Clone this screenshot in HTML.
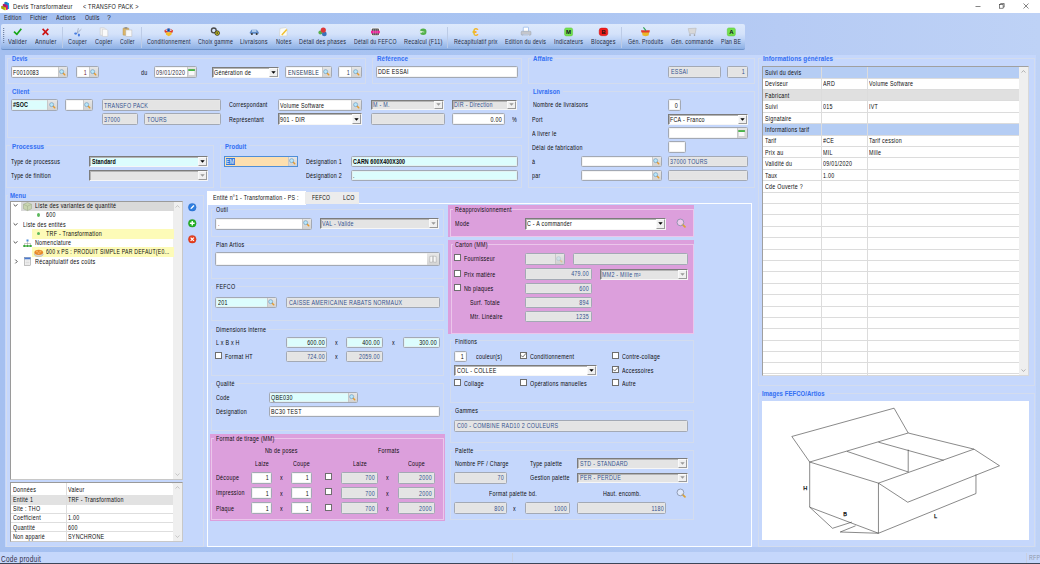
<!DOCTYPE html>
<html><head><meta charset="utf-8"><style>
html,body{margin:0;padding:0;}
body{width:1040px;height:564px;overflow:hidden;position:relative;background:linear-gradient(90deg,#a5c0f0 0%,#a9c4f2 50%,#b6cbf4 75%,#bed2f6 100%);font-family:"Liberation Sans",sans-serif;}
.a{position:absolute;white-space:nowrap;}
svg.a{overflow:visible;}

</style></head><body>
<div class="a" style="left:0px;top:0px;width:1041px;height:13px;background:#ffffff;"></div>
<svg class="a" style="left:0;top:0" width="12" height="12" viewBox="0 0 12 12"><path d="M4.3 2.2 L6 1.7 L9 3.2 L9.1 8.8 L6.5 9 L4.3 7.5 Z" fill="#1b7cc4"/><path d="M7.6 3 L9 3.2 L9.1 8.8 L7.8 8.9 Z" fill="#1aa2ee"/><path d="M2.8 4.3 L4 3.8 L7.5 5.3 L7.6 9.6 L6 9.8 L2.8 8.2 Z" fill="#b01868"/><path d="M6.3 5.1 L7.5 5.3 L7.6 9.6 L6.4 9.7 Z" fill="#e01a7a"/><path d="M1.1 6.3 L2.2 5.8 L5.8 7.5 L6 10 L4.8 10.2 L1.1 8.4 Z" fill="#a8a010"/><path d="M4.6 7.3 L5.8 7.5 L6 10 L4.8 10.2 Z" fill="#f2ee18"/></svg>
<div class="a" style="top:2.50px;font-size:7.60px;line-height:8px;color:#1a1a1a;letter-spacing:0.3px;left:13px;transform-origin:0 0;transform:scaleX(0.7595043755270457);">Devis Transformateur</div>
<div class="a" style="top:2.50px;font-size:7.60px;line-height:8px;color:#1a1a1a;letter-spacing:0.3px;left:83.25px;transform-origin:0 0;transform:scaleX(0.7300866402366534);">&lt; TRANSFO PACK &gt;</div>
<svg class="a" style="left:974px;top:2px" width="60" height="8" viewBox="0 0 60 8"><path d="M1.5 4.5 L6.5 4.5" stroke="#333" stroke-width="0.6"/><rect x="25.5" y="2.6" width="3.6" height="3.6" fill="none" stroke="#333" stroke-width="0.6"/><path d="M26.6 2.6 L26.6 1.5 L30.2 1.5 L30.2 5.1 L29.1 5.1" fill="none" stroke="#333" stroke-width="0.6"/></svg>
<svg class="a" style="left:1022.5px;top:2.5px" width="6" height="6" viewBox="0 0 6 6"><path d="M0.5 0.5 L5.5 5.5 M5.5 0.5 L0.5 5.5" stroke="#333" stroke-width="0.6"/></svg>
<div class="a" style="top:14.20px;font-size:6.80px;line-height:8px;color:#1c1c2c;letter-spacing:0.3px;left:3.8px;transform-origin:0 0;transform:scaleX(0.7702182284980743);">Edition</div>
<div class="a" style="top:14.20px;font-size:6.80px;line-height:8px;color:#1c1c2c;letter-spacing:0.3px;left:29.8px;transform-origin:0 0;transform:scaleX(0.7837087666158081);">Fichier</div>
<div class="a" style="top:14.20px;font-size:6.80px;line-height:8px;color:#1c1c2c;letter-spacing:0.3px;left:55.8px;transform-origin:0 0;transform:scaleX(0.8050230951374425);">Actions</div>
<div class="a" style="top:14.20px;font-size:6.80px;line-height:8px;color:#1c1c2c;letter-spacing:0.3px;left:84.8px;transform-origin:0 0;transform:scaleX(0.7626537968838443);">Outils</div>
<div class="a" style="top:14.20px;font-size:6.80px;line-height:8px;color:#1c1c2c;letter-spacing:0.3px;left:107.39999999999999px;transform-origin:0 0;transform:scaleX(1.004908847495167);">?</div>
<div class="a" style="left:1px;top:24px;width:744px;height:26px;background:linear-gradient(#dde9fc 0%,#d4e2fa 40%,#c2d6f7 58%,#8db0e5 100%);border-bottom:1px solid #6d92c9;border-radius:2px;box-sizing:border-box;"></div>
<svg class="a" style="left:3px;top:28px" width="2" height="17"><rect x="0.2" y="0" width="1" height="1" fill="#5a6d90"/><rect x="0.2" y="2" width="1" height="1" fill="#5a6d90"/><rect x="0.2" y="4" width="1" height="1" fill="#5a6d90"/><rect x="0.2" y="6" width="1" height="1" fill="#5a6d90"/><rect x="0.2" y="8" width="1" height="1" fill="#5a6d90"/><rect x="0.2" y="10" width="1" height="1" fill="#5a6d90"/><rect x="0.2" y="12" width="1" height="1" fill="#5a6d90"/><rect x="0.2" y="14" width="1" height="1" fill="#5a6d90"/></svg>
<div class="a" style="left:62px;top:27px;width:1px;height:21px;background:#bccbe6;"></div>
<div class="a" style="left:141px;top:27px;width:1px;height:21px;background:#bccbe6;"></div>
<div class="a" style="left:447px;top:27px;width:1px;height:21px;background:#bccbe6;"></div>
<div class="a" style="left:621px;top:27px;width:1px;height:21px;background:#bccbe6;"></div>
<div class="a" style="top:38.30px;font-size:6.80px;line-height:8px;color:#1e2a40;letter-spacing:0.3px;left:8.3px;transform-origin:0 0;transform:scaleX(0.8414444796901347);">Valider</div>
<div class="a" style="top:38.30px;font-size:6.80px;line-height:8px;color:#1e2a40;letter-spacing:0.3px;left:34.8px;transform-origin:0 0;transform:scaleX(0.8479739267829989);">Annuler</div>
<div class="a" style="top:38.30px;font-size:6.80px;line-height:8px;color:#1e2a40;letter-spacing:0.3px;left:67.8px;transform-origin:0 0;transform:scaleX(0.7940905378755453);">Couper</div>
<div class="a" style="top:38.30px;font-size:6.80px;line-height:8px;color:#1e2a40;letter-spacing:0.3px;left:94.8px;transform-origin:0 0;transform:scaleX(0.8081652558609398);">Copier</div>
<div class="a" style="top:38.30px;font-size:6.80px;line-height:8px;color:#1e2a40;letter-spacing:0.3px;left:120.39999999999999px;transform-origin:0 0;transform:scaleX(0.7554639710535286);">Coller</div>
<div class="a" style="top:38.30px;font-size:6.80px;line-height:8px;color:#1e2a40;letter-spacing:0.3px;left:146.8px;transform-origin:0 0;transform:scaleX(0.7804632426988921);">Conditionnement</div>
<div class="a" style="top:38.30px;font-size:6.80px;line-height:8px;color:#1e2a40;letter-spacing:0.3px;left:197.8px;transform-origin:0 0;transform:scaleX(0.7764797821851842);">Choix gamme</div>
<div class="a" style="top:38.30px;font-size:6.80px;line-height:8px;color:#1e2a40;letter-spacing:0.3px;left:240.4px;transform-origin:0 0;transform:scaleX(0.8270370571890123);">Livraisons</div>
<div class="a" style="top:38.30px;font-size:6.80px;line-height:8px;color:#1e2a40;letter-spacing:0.3px;left:275.8px;transform-origin:0 0;transform:scaleX(0.8121131421263919);">Notes</div>
<div class="a" style="top:38.30px;font-size:6.80px;line-height:8px;color:#1e2a40;letter-spacing:0.3px;left:299.2px;transform-origin:0 0;transform:scaleX(0.7986202560682399);">Détail des phases</div>
<div class="a" style="top:38.30px;font-size:6.80px;line-height:8px;color:#1e2a40;letter-spacing:0.3px;left:353.8px;transform-origin:0 0;transform:scaleX(0.7575732196080139);">Détail du FEFCO</div>
<div class="a" style="top:38.30px;font-size:6.80px;line-height:8px;color:#1e2a40;letter-spacing:0.3px;left:403.8px;transform-origin:0 0;transform:scaleX(0.8045214948240433);">Recalcul (F11)</div>
<div class="a" style="top:38.30px;font-size:6.80px;line-height:8px;color:#1e2a40;letter-spacing:0.3px;left:453.55px;transform-origin:0 0;transform:scaleX(0.7866166790281081);">Récapitulatif prix</div>
<div class="a" style="top:38.30px;font-size:6.80px;line-height:8px;color:#1e2a40;letter-spacing:0.3px;left:504.8px;transform-origin:0 0;transform:scaleX(0.7808649984406512);">Edition du devis</div>
<div class="a" style="top:38.30px;font-size:6.80px;line-height:8px;color:#1e2a40;letter-spacing:0.3px;left:553.8px;transform-origin:0 0;transform:scaleX(0.7970105210904427);">Indicateurs</div>
<div class="a" style="top:38.30px;font-size:6.80px;line-height:8px;color:#1e2a40;letter-spacing:0.3px;left:590.8px;transform-origin:0 0;transform:scaleX(0.8113742027063817);">Blocages</div>
<div class="a" style="top:38.30px;font-size:6.80px;line-height:8px;color:#1e2a40;letter-spacing:0.3px;left:627.55px;transform-origin:0 0;transform:scaleX(0.77809275961444);">Gén. Produits</div>
<div class="a" style="top:38.30px;font-size:6.80px;line-height:8px;color:#1e2a40;letter-spacing:0.3px;left:670.8px;transform-origin:0 0;transform:scaleX(0.7871411946120741);">Gén. commande</div>
<div class="a" style="top:38.30px;font-size:6.80px;line-height:8px;color:#1e2a40;letter-spacing:0.3px;left:721.3px;transform-origin:0 0;transform:scaleX(0.7546364875274041);">Plan BE</div>
<svg class="a" style="left:0;top:0" width="1040" height="60" viewBox="0 0 1040 60"><path d="M14 31.6 L16.9 34.3 L21.3 28.7" fill="none" stroke="#17a617" stroke-width="1.7" stroke-linejoin="round"/><path d="M42.6 28.9 L48.3 34.9 M48.3 28.9 L42.6 34.9" stroke="#cc1414" stroke-width="1.6"/><path d="M78.4 28.2 L77.2 33.2 M81.4 29.2 L77.2 33.2" stroke="#8894a8" stroke-width="0.6"/><ellipse cx="75.6" cy="33.6" rx="1.5" ry="1.1" fill="#4a7ee0"/><ellipse cx="78.9" cy="35.1" rx="1.1" ry="1.5" fill="#4a7ee0"/><path d="M100.2 27.8 L104.2 27.8 L105.6 29.2 L105.6 35.2 L100.2 35.2 Z" fill="#f2f2f2" stroke="#c4c4c4" stroke-width="0.5"/><path d="M102.4 29.2 L106.4 29.2 L107.8 30.6 L107.8 36.4 L102.4 36.4 Z" fill="#fafafa" stroke="#c0c0c0" stroke-width="0.5"/><rect x="123" y="28" width="5.8" height="7.2" rx="0.6" fill="#dcb66a" stroke="#a8884a" stroke-width="0.4"/><rect x="124.5" y="27.2" width="2.8" height="1.4" fill="#888"/><rect x="125.9" y="30" width="6" height="6.4" fill="#f8f8f8" stroke="#b8b8b8" stroke-width="0.5"/><path d="M165.5 32.2 L172 32.2 L171.4 34.8 L168.7 36.2 L166.1 34.8 Z" fill="#f3be2a"/><path d="M164.3 30.4 Q168.7 26.6 173.1 30.4 L172.4 32.8 Q168.7 31.2 165 32.8 Z" fill="#e03a2a"/><path d="M165.4 30.3 Q168.7 27.8 172 30.3 Q168.7 32 165.4 30.3 Z" fill="#f4f4f4"/><circle cx="168.6" cy="30.1" r="1.8" fill="#2f7ad8"/><circle cx="168.6" cy="30.1" r="0.6" fill="#123"/><circle cx="213.8" cy="30.4" r="2.4" fill="none" stroke="#4a4a4a" stroke-width="1.3"/><circle cx="217.2" cy="33.1" r="2.3" fill="#c9c21a" stroke="#2a2a2a" stroke-width="0.8"/><circle cx="217.2" cy="33.1" r="0.8" fill="#333"/><path d="M249.9 32.2 L251.5 29.7 L256.8 29.7 L258.7 32.2 L258.7 33.8 L249.9 33.8 Z" fill="#5f8cc8"/><rect x="252" y="30.2" width="4.4" height="1.6" fill="#c2daf4"/><circle cx="251.9" cy="34.1" r="1" fill="#333"/><circle cx="256.7" cy="34.1" r="1" fill="#333"/><path d="M280 28.4 L285.8 27.6 L287.2 29 L287 35.9 L279.4 36 Z" fill="#fbfbf6" stroke="#c8c8c0" stroke-width="0.5"/><path d="M281.8 35 L286.8 29.6" stroke="#f0c030" stroke-width="1.5"/><circle cx="320.4" cy="32.6" r="2" fill="#5aae4a"/><circle cx="324.3" cy="33.9" r="2.4" fill="#3a72b8"/><circle cx="323.3" cy="30.1" r="2.6" fill="#dd3838"/><rect x="371" y="27.7" width="8.8" height="8.1" rx="1.4" fill="#fafafa"/><rect x="371.8" y="28.4" width="7.2" height="6.8" rx="1" fill="#555"/><rect x="371" y="30.7" width="8.8" height="2.7" fill="#f0209c"/><path d="M373.5 28.6 L373.5 35 M375.4 28.6 L375.4 35 M377.3 28.6 L377.3 35" stroke="#bbb" stroke-width="0.4"/><circle cx="423.2" cy="31.7" r="3.3" fill="#52b04a"/><path d="M419.6 30.4 L423.6 31.6 L420.4 33.6 Z" fill="#d8ecd8"/><circle cx="423.6" cy="31.9" r="0.9" fill="#8fcf8a"/><text x="475.8" y="35.6" font-size="11" font-family="Liberation Sans" font-weight="bold" text-anchor="middle" fill="#f2b82e">€</text><rect x="523.3" y="27.2" width="5.2" height="4.6" rx="0.6" fill="#fff" stroke="#6a9ae0" stroke-width="0.5"/><rect x="521.2" y="31.2" width="9.8" height="4" rx="1" fill="#c4c6cc" stroke="#8c929c" stroke-width="0.4"/><rect x="523" y="34.5" width="5.8" height="1.2" fill="#f4f4f4" stroke="#7aa0d8" stroke-width="0.3"/><rect x="564.6" y="27.9" width="8" height="8" rx="1.6" fill="#74e04e" stroke="#56c436" stroke-width="0.5"/><text x="568.6" y="34.4" font-size="6" font-family="Liberation Sans" font-weight="bold" text-anchor="middle" fill="#112">M</text><rect x="599.2" y="28.1" width="8.6" height="7.6" rx="2.4" fill="#f21c1c" stroke="#cc1010" stroke-width="0.5"/><text x="603.5" y="34.2" font-size="5.8" font-family="Liberation Sans" font-weight="bold" text-anchor="middle" fill="#111">B</text><rect x="727.3" y="27.9" width="8" height="8" rx="1.6" fill="#74e04e" stroke="#56c436" stroke-width="0.5"/><text x="731.3" y="34.4" font-size="6" font-family="Liberation Sans" font-weight="bold" text-anchor="middle" fill="#112">A</text><path d="M641.8 31 L649.4 31 L648.6 35.6 L645.6 36.2 L642.6 35.6 Z" fill="#eab628"/><path d="M641 30.2 L649.8 30.2 L649.4 32.6 L641.4 32.6 Z" fill="#e23a2e"/><path d="M643.4 27.4 L646 30.6" stroke="#2aa050" stroke-width="1.1"/><path d="M688.2 28.6 L696.2 28.2 L695.2 33.6 L689.4 33.6 Z" fill="#d8d8d8" stroke="#b2b2b2" stroke-width="0.5"/><circle cx="690" cy="35.1" r="0.8" fill="#999"/><circle cx="694.5" cy="35.1" r="0.8" fill="#999"/></svg>
<div class="a" style="left:5px;top:55px;width:1031px;height:492px;background:#c5d7fc;"></div>
<div class="a" style="left:0px;top:552px;width:1041px;height:11px;background:#c5d7fb;"></div>
<div class="a" style="left:0px;top:563px;width:1041px;height:2px;background:#3c4658;"></div>
<div class="a" style="top:554.80px;font-size:8.40px;line-height:8px;color:#332f48;letter-spacing:0.3px;left:1px;transform-origin:0 0;transform:scaleX(0.7782820396826554);">Code produit</div>
<div class="a" style="left:1026px;top:553px;width:1px;height:10px;background:#c8d0e2;"></div>
<div class="a" style="left:512px;top:553px;width:1px;height:9px;background:#c8d0e2;"></div>
<div class="a" style="top:554.20px;font-size:7.00px;line-height:8px;color:#9098a8;letter-spacing:0.3px;left:1029px;transform-origin:0 0;transform:scaleX(0.7534246575342466);">RFP</div>
<div class="a" style="left:7px;top:58px;width:359px;height:26px;border:1px solid #d3dcee;box-sizing:border-box;"></div>
<div class="a" style="left:10px;top:58px;width:20px;height:3px;background:#c5d7fc;"></div>
<div class="a" style="top:55.10px;font-size:7.30px;line-height:8px;color:#3470f4;letter-spacing:0.1px;-webkit-text-stroke:0.05px #3470f4;font-weight:bold;left:11.5px;transform-origin:0 0;transform:scaleX(0.7794771676542043);">Devis</div>
<div class="a" style="left:11px;top:66px;width:57px;height:12px;background:#ffffff;border:1px solid #a3a9b4;border-radius:1.5px;box-sizing:border-box;box-shadow:inset 0 0 0 0.5px #e8e8e8;"></div>
<div class="a" style="left:58px;top:67px;width:9px;height:10px;background:linear-gradient(#e6e6e6,#d2d2d2);border-left:1px solid #c8c8c8;box-sizing:border-box;"></div>
<svg class="a" style="left:59.05px;top:68.80px;" width="6.40" height="6.40" viewBox="0 0 8 8"><line x1="4.6" y1="4.6" x2="7.2" y2="7.2" stroke="#e89a2a" stroke-width="1.8" stroke-linecap="round"/><circle cx="3.3" cy="3.3" r="2.5" fill="#b8e6fa" stroke="#5f8fb5" stroke-width="0.7"/></svg>
<div class="a" style="top:68.50px;font-size:6.40px;line-height:8px;color:#0c0c0c;letter-spacing:0.3px;left:13.2px;transform-origin:0 0;transform:scaleX(0.836);">F0010083</div>
<div class="a" style="left:76px;top:66px;width:23px;height:12px;background:#ffffff;border:1px solid #a3a9b4;border-radius:1.5px;box-sizing:border-box;box-shadow:inset 0 0 0 0.5px #e8e8e8;"></div>
<div class="a" style="left:89px;top:67px;width:9px;height:10px;background:linear-gradient(#e6e6e6,#d2d2d2);border-left:1px solid #c8c8c8;box-sizing:border-box;"></div>
<svg class="a" style="left:90.30px;top:68.80px;" width="6.40" height="6.40" viewBox="0 0 8 8"><line x1="4.6" y1="4.6" x2="7.2" y2="7.2" stroke="#e89a2a" stroke-width="1.8" stroke-linecap="round"/><circle cx="3.3" cy="3.3" r="2.5" fill="#b8e6fa" stroke="#5f8fb5" stroke-width="0.7"/></svg>
<div class="a" style="top:68.50px;font-size:6.40px;line-height:8px;color:#6a1a3a;letter-spacing:0.3px;left:-212.95px;width:300px;text-align:right;transform-origin:100% 0;transform:scaleX(0.836);">1</div>
<div class="a" style="top:68.80px;font-size:6.40px;line-height:8px;color:#0c0c0c;letter-spacing:0.3px;left:141.25px;transform-origin:0 0;transform:scaleX(0.836);">du</div>
<div class="a" style="left:154px;top:66px;width:43px;height:12px;background:#ffffff;border:1px solid #a3a9b4;border-radius:1.5px;box-sizing:border-box;box-shadow:inset 0 0 0 0.5px #e8e8e8;"></div>
<div class="a" style="left:187px;top:67px;width:9px;height:10px;background:linear-gradient(#e4e4e4,#d4d4d4);border-left:1px solid #c8c8c8;box-sizing:border-box;"></div>
<svg class="a" style="left:187.75px;top:68.60px" width="7.2" height="6.8" viewBox="0 0 7.2 6.8"><rect x="0.3" y="0.3" width="6.6" height="6.2" fill="#f8f8f8" stroke="#c4c4c4" stroke-width="0.5"/><rect x="0.3" y="0.3" width="6.6" height="1.5" fill="#1fa51f"/></svg>
<div class="a" style="top:68.50px;font-size:6.40px;line-height:8px;color:#2c2c3c;letter-spacing:0.3px;left:156.2px;transform-origin:0 0;transform:scaleX(0.836);">09/01/2020</div>
<div class="a" style="left:212px;top:67px;width:67px;height:11px;background:#ffffff;border-top:1px solid #7c7c7c;border-left:1px solid #7c7c7c;border-bottom:1px solid #f6f6f6;border-right:1px solid #f6f6f6;box-sizing:border-box;box-shadow:inset 1px 1px 0 #b4b4b4;"></div>
<div class="a" style="left:269px;top:68px;width:9px;height:9px;background:#f0f0f0;border-top:1px solid #fafafa;border-left:1px solid #fafafa;border-right:1px solid #9a9a9a;border-bottom:1px solid #9a9a9a;box-sizing:border-box;"></div>
<svg class="a" style="left:270.50px;top:70.85px" width="5" height="3" viewBox="0 0 5 3"><path d="M0.3 0.3 L4.7 0.3 L2.5 2.8 Z" fill="#000"/></svg>
<div class="a" style="top:68.85px;font-size:6.40px;line-height:8px;color:#0c0c0c;letter-spacing:0.3px;left:214.45px;transform-origin:0 0;transform:scaleX(0.836);">Génération de</div>
<div class="a" style="left:285px;top:66px;width:47px;height:12px;background:#ffffff;border:1px solid #a3a9b4;border-radius:1.5px;box-sizing:border-box;box-shadow:inset 0 0 0 0.5px #e8e8e8;"></div>
<div class="a" style="left:322px;top:67px;width:9px;height:10px;background:linear-gradient(#e6e6e6,#d2d2d2);border-left:1px solid #c8c8c8;box-sizing:border-box;"></div>
<svg class="a" style="left:323.45px;top:68.80px;" width="6.40" height="6.40" viewBox="0 0 8 8"><line x1="4.6" y1="4.6" x2="7.2" y2="7.2" stroke="#e89a2a" stroke-width="1.8" stroke-linecap="round"/><circle cx="3.3" cy="3.3" r="2.5" fill="#b8e6fa" stroke="#5f8fb5" stroke-width="0.7"/></svg>
<div class="a" style="top:68.50px;font-size:6.40px;line-height:8px;color:#2a3a5a;letter-spacing:0.3px;left:287.59999999999997px;transform-origin:0 0;transform:scaleX(0.836);">ENSEMBLE</div>
<div class="a" style="left:338px;top:66px;width:24px;height:12px;background:#ffffff;border:1px solid #a3a9b4;border-radius:1.5px;box-sizing:border-box;box-shadow:inset 0 0 0 0.5px #e8e8e8;"></div>
<div class="a" style="left:351px;top:67px;width:10px;height:10px;background:linear-gradient(#e6e6e6,#d2d2d2);border-left:1px solid #c8c8c8;box-sizing:border-box;"></div>
<svg class="a" style="left:352.80px;top:68.80px;" width="6.40" height="6.40" viewBox="0 0 8 8"><line x1="4.6" y1="4.6" x2="7.2" y2="7.2" stroke="#e89a2a" stroke-width="1.8" stroke-linecap="round"/><circle cx="3.3" cy="3.3" r="2.5" fill="#b8e6fa" stroke="#5f8fb5" stroke-width="0.7"/></svg>
<div class="a" style="top:68.50px;font-size:6.40px;line-height:8px;color:#2a3a5a;letter-spacing:0.3px;left:49.55000000000001px;width:300px;text-align:right;transform-origin:100% 0;transform:scaleX(0.836);">1</div>
<div class="a" style="left:372px;top:58px;width:150px;height:26px;border:1px solid #d3dcee;box-sizing:border-box;"></div>
<div class="a" style="left:375px;top:58px;width:35px;height:3px;background:#c5d7fc;"></div>
<div class="a" style="top:55.10px;font-size:7.30px;line-height:8px;color:#3470f4;letter-spacing:0.1px;-webkit-text-stroke:0.05px #3470f4;font-weight:bold;left:376.9px;transform-origin:0 0;transform:scaleX(0.8584368047511016);">Référence</div>
<div class="a" style="left:376px;top:66px;width:142px;height:12px;background:#ffffff;border:1px solid #a3a9b4;border-radius:1.5px;box-sizing:border-box;box-shadow:inset 0 0 0 0.5px #e8e8e8;"></div>
<div class="a" style="top:68.42px;font-size:6.40px;line-height:8px;color:#0c0c0c;letter-spacing:0.3px;left:378.45px;transform-origin:0 0;transform:scaleX(0.836);">DDE ESSAI</div>
<div class="a" style="left:528px;top:58px;width:227px;height:26px;border:1px solid #d3dcee;box-sizing:border-box;"></div>
<div class="a" style="left:531px;top:58px;width:24px;height:3px;background:#c5d7fc;"></div>
<div class="a" style="top:55.10px;font-size:7.30px;line-height:8px;color:#3470f4;letter-spacing:0.1px;-webkit-text-stroke:0.05px #3470f4;font-weight:bold;left:533px;transform-origin:0 0;transform:scaleX(0.832296378633352);">Affaire</div>
<div class="a" style="left:668px;top:66px;width:53px;height:12px;background:#e4e4e4;border:1px solid #a3a9b4;border-radius:1.5px;box-sizing:border-box;box-shadow:inset 0 0 0 0.5px #e8e8e8;"></div>
<div class="a" style="top:68.42px;font-size:6.40px;line-height:8px;color:#33528f;letter-spacing:0.3px;left:670.7px;transform-origin:0 0;transform:scaleX(0.836);">ESSAI</div>
<div class="a" style="left:727px;top:66px;width:21px;height:12px;background:#e4e4e4;border:1px solid #a3a9b4;border-radius:1.5px;box-sizing:border-box;box-shadow:inset 0 0 0 0.5px #e8e8e8;"></div>
<div class="a" style="top:68.42px;font-size:6.40px;line-height:8px;color:#33528f;letter-spacing:0.3px;left:445.29999999999995px;width:300px;text-align:right;transform-origin:100% 0;transform:scaleX(0.836);">1</div>
<div class="a" style="left:7px;top:91px;width:515px;height:47px;border:1px solid #d3dcee;box-sizing:border-box;"></div>
<div class="a" style="left:10px;top:90px;width:21px;height:3px;background:#c5d7fc;"></div>
<div class="a" style="top:88.00px;font-size:7.30px;line-height:8px;color:#3470f4;letter-spacing:0.1px;-webkit-text-stroke:0.05px #3470f4;font-weight:bold;left:11.5px;transform-origin:0 0;transform:scaleX(0.829971956307615);">Client</div>
<div class="a" style="left:11px;top:99px;width:47px;height:12px;background:#dcfdfd;border:1px solid #a3a9b4;border-radius:1.5px;box-sizing:border-box;box-shadow:inset 0 0 0 0.5px #e8e8e8;"></div>
<div class="a" style="left:47px;top:100px;width:10px;height:10px;background:linear-gradient(#e6e6e6,#d2d2d2);border-left:1px solid #c8c8c8;box-sizing:border-box;"></div>
<svg class="a" style="left:48.80px;top:101.72px;" width="6.40" height="6.40" viewBox="0 0 8 8"><line x1="4.6" y1="4.6" x2="7.2" y2="7.2" stroke="#e89a2a" stroke-width="1.8" stroke-linecap="round"/><circle cx="3.3" cy="3.3" r="2.5" fill="#b8e6fa" stroke="#5f8fb5" stroke-width="0.7"/></svg>
<div class="a" style="top:101.42px;font-size:6.40px;line-height:8px;color:#0c0c0c;letter-spacing:0.1px;-webkit-text-stroke:0.05px #0c0c0c;font-weight:bold;left:13.2px;transform-origin:0 0;transform:scaleX(0.836);">#SOC</div>
<div class="a" style="left:65px;top:99px;width:28px;height:12px;background:#ffffff;border:1px solid #a3a9b4;border-radius:1.5px;box-sizing:border-box;box-shadow:inset 0 0 0 0.5px #e8e8e8;"></div>
<div class="a" style="left:83px;top:100px;width:9px;height:10px;background:linear-gradient(#e6e6e6,#d2d2d2);border-left:1px solid #c8c8c8;box-sizing:border-box;"></div>
<svg class="a" style="left:84.05px;top:101.72px;" width="6.40" height="6.40" viewBox="0 0 8 8"><line x1="4.6" y1="4.6" x2="7.2" y2="7.2" stroke="#e89a2a" stroke-width="1.8" stroke-linecap="round"/><circle cx="3.3" cy="3.3" r="2.5" fill="#b8e6fa" stroke="#5f8fb5" stroke-width="0.7"/></svg>
<div class="a" style="left:102px;top:99px;width:119px;height:12px;background:#e4e4e4;border:1px solid #a3a9b4;border-radius:1.5px;box-sizing:border-box;box-shadow:inset 0 0 0 0.5px #e8e8e8;"></div>
<div class="a" style="top:101.60px;font-size:6.40px;line-height:8px;color:#33528f;letter-spacing:0.3px;left:104.45px;transform-origin:0 0;transform:scaleX(0.836);">TRANSFO PACK</div>
<div class="a" style="left:102px;top:113px;width:36px;height:12px;background:#e4e4e4;border:1px solid #a3a9b4;border-radius:1.5px;box-sizing:border-box;box-shadow:inset 0 0 0 0.5px #e8e8e8;"></div>
<div class="a" style="top:115.58px;font-size:6.40px;line-height:8px;color:#33528f;letter-spacing:0.3px;left:104.45px;transform-origin:0 0;transform:scaleX(0.836);">37000</div>
<div class="a" style="left:144px;top:113px;width:77px;height:12px;background:#e4e4e4;border:1px solid #a3a9b4;border-radius:1.5px;box-sizing:border-box;box-shadow:inset 0 0 0 0.5px #e8e8e8;"></div>
<div class="a" style="top:115.58px;font-size:6.40px;line-height:8px;color:#33528f;letter-spacing:0.3px;left:146.6px;transform-origin:0 0;transform:scaleX(0.836);">TOURS</div>
<div class="a" style="top:101.30px;font-size:6.40px;line-height:8px;color:#0c0c0c;letter-spacing:0.3px;left:228.75px;transform-origin:0 0;transform:scaleX(0.836);">Correspondant</div>
<div class="a" style="top:115.50px;font-size:6.40px;line-height:8px;color:#0c0c0c;letter-spacing:0.3px;left:228.75px;transform-origin:0 0;transform:scaleX(0.836);">Représentant</div>
<div class="a" style="left:278px;top:99px;width:84px;height:12px;background:#ffffff;border:1px solid #a3a9b4;border-radius:1.5px;box-sizing:border-box;box-shadow:inset 0 0 0 0.5px #e8e8e8;"></div>
<div class="a" style="left:351px;top:100px;width:10px;height:10px;background:linear-gradient(#e6e6e6,#d2d2d2);border-left:1px solid #c8c8c8;box-sizing:border-box;"></div>
<svg class="a" style="left:352.80px;top:101.97px;" width="6.40" height="6.40" viewBox="0 0 8 8"><line x1="4.6" y1="4.6" x2="7.2" y2="7.2" stroke="#e89a2a" stroke-width="1.8" stroke-linecap="round"/><circle cx="3.3" cy="3.3" r="2.5" fill="#b8e6fa" stroke="#5f8fb5" stroke-width="0.7"/></svg>
<div class="a" style="top:101.67px;font-size:6.40px;line-height:8px;color:#0c0c0c;letter-spacing:0.3px;left:280.3px;transform-origin:0 0;transform:scaleX(0.836);">Volume Software</div>
<div class="a" style="left:278px;top:113px;width:84px;height:12px;background:#ffffff;border-top:1px solid #7c7c7c;border-left:1px solid #7c7c7c;border-bottom:1px solid #f6f6f6;border-right:1px solid #f6f6f6;box-sizing:border-box;box-shadow:inset 1px 1px 0 #b4b4b4;"></div>
<div class="a" style="left:352px;top:114px;width:9px;height:10px;background:#f0f0f0;border-top:1px solid #fafafa;border-left:1px solid #fafafa;border-right:1px solid #9a9a9a;border-bottom:1px solid #9a9a9a;box-sizing:border-box;"></div>
<svg class="a" style="left:353.75px;top:117.65px" width="5" height="3" viewBox="0 0 5 3"><path d="M0.3 0.3 L4.7 0.3 L2.5 2.8 Z" fill="#000"/></svg>
<div class="a" style="top:115.65px;font-size:6.40px;line-height:8px;color:#0c0c0c;letter-spacing:0.3px;left:280.3px;transform-origin:0 0;transform:scaleX(0.836);">901 - DIR</div>
<div class="a" style="left:371px;top:100px;width:73px;height:10px;background:#e4e4e4;border-top:1px solid #7c7c7c;border-left:1px solid #7c7c7c;border-bottom:1px solid #f6f6f6;border-right:1px solid #f6f6f6;box-sizing:border-box;box-shadow:inset 1px 1px 0 #b4b4b4;"></div>
<div class="a" style="left:434px;top:101px;width:9px;height:8px;background:#f0f0f0;border-top:1px solid #fafafa;border-left:1px solid #fafafa;border-right:1px solid #9a9a9a;border-bottom:1px solid #9a9a9a;box-sizing:border-box;"></div>
<svg class="a" style="left:436.25px;top:103.38px" width="5" height="3" viewBox="0 0 5 3"><path d="M0.3 0.3 L4.7 0.3 L2.5 2.8 Z" fill="#9a9a9a"/></svg>
<div class="a" style="top:101.38px;font-size:6.40px;line-height:8px;color:#33528f;letter-spacing:0.3px;left:373.4px;transform-origin:0 0;transform:scaleX(0.836);">M - M.</div>
<div class="a" style="left:371px;top:113px;width:74px;height:12px;background:#e4e4e4;border:1px solid #a3a9b4;border-radius:1.5px;box-sizing:border-box;box-shadow:inset 0 0 0 0.5px #e8e8e8;"></div>
<div class="a" style="left:452px;top:100px;width:65px;height:10px;background:#e4e4e4;border-top:1px solid #7c7c7c;border-left:1px solid #7c7c7c;border-bottom:1px solid #f6f6f6;border-right:1px solid #f6f6f6;box-sizing:border-box;box-shadow:inset 1px 1px 0 #b4b4b4;"></div>
<div class="a" style="left:507px;top:101px;width:9px;height:8px;background:#f0f0f0;border-top:1px solid #fafafa;border-left:1px solid #fafafa;border-right:1px solid #9a9a9a;border-bottom:1px solid #9a9a9a;box-sizing:border-box;"></div>
<svg class="a" style="left:508.50px;top:103.38px" width="5" height="3" viewBox="0 0 5 3"><path d="M0.3 0.3 L4.7 0.3 L2.5 2.8 Z" fill="#9a9a9a"/></svg>
<div class="a" style="top:101.38px;font-size:6.40px;line-height:8px;color:#33528f;letter-spacing:0.3px;left:454.4px;transform-origin:0 0;transform:scaleX(0.836);">DIR - Direction</div>
<div class="a" style="left:452px;top:113px;width:53px;height:12px;background:#ffffff;border:1px solid #a3a9b4;border-radius:1.5px;box-sizing:border-box;box-shadow:inset 0 0 0 0.5px #e8e8e8;"></div>
<div class="a" style="top:115.58px;font-size:6.40px;line-height:8px;color:#0c0c0c;letter-spacing:0.3px;left:201.8px;width:300px;text-align:right;transform-origin:100% 0;transform:scaleX(0.836);">0.00</div>
<div class="a" style="top:115.50px;font-size:6.40px;line-height:8px;color:#0c0c0c;letter-spacing:0.3px;left:512px;transform-origin:0 0;transform:scaleX(0.836);">%</div>
<div class="a" style="left:528px;top:91px;width:227px;height:97px;border:1px solid #d3dcee;box-sizing:border-box;"></div>
<div class="a" style="left:531px;top:91px;width:32px;height:3px;background:#c5d7fc;"></div>
<div class="a" style="top:88.20px;font-size:7.30px;line-height:8px;color:#3470f4;letter-spacing:0.1px;-webkit-text-stroke:0.05px #3470f4;font-weight:bold;left:533px;transform-origin:0 0;transform:scaleX(0.8117118463812785);">Livraison</div>
<div class="a" style="top:101.30px;font-size:6.40px;line-height:8px;color:#0c0c0c;letter-spacing:0.3px;left:533px;transform-origin:0 0;transform:scaleX(0.836);">Nombre de livraisons</div>
<div class="a" style="left:668px;top:99px;width:13px;height:12px;background:#ffffff;border:1px solid #a3a9b4;border-radius:1.5px;box-sizing:border-box;box-shadow:inset 0 0 0 0.5px #e8e8e8;"></div>
<div class="a" style="top:101.50px;font-size:6.40px;line-height:8px;color:#0c0c0c;letter-spacing:0.3px;left:378.04999999999995px;width:300px;text-align:right;transform-origin:100% 0;transform:scaleX(0.836);">0</div>
<div class="a" style="top:115.80px;font-size:6.40px;line-height:8px;color:#0c0c0c;letter-spacing:0.3px;left:532.4px;transform-origin:0 0;transform:scaleX(0.836);">Port</div>
<div class="a" style="left:668px;top:114px;width:80px;height:11px;background:#ffffff;border-top:1px solid #7c7c7c;border-left:1px solid #7c7c7c;border-bottom:1px solid #f6f6f6;border-right:1px solid #f6f6f6;box-sizing:border-box;box-shadow:inset 1px 1px 0 #b4b4b4;"></div>
<div class="a" style="left:738px;top:115px;width:9px;height:9px;background:#f0f0f0;border-top:1px solid #fafafa;border-left:1px solid #fafafa;border-right:1px solid #9a9a9a;border-bottom:1px solid #9a9a9a;box-sizing:border-box;"></div>
<svg class="a" style="left:739.70px;top:117.65px" width="5" height="3" viewBox="0 0 5 3"><path d="M0.3 0.3 L4.7 0.3 L2.5 2.8 Z" fill="#000"/></svg>
<div class="a" style="top:115.65px;font-size:6.40px;line-height:8px;color:#0c0c0c;letter-spacing:0.3px;left:670.4000000000001px;transform-origin:0 0;transform:scaleX(0.836);">FCA - Franco</div>
<div class="a" style="top:129.70px;font-size:6.40px;line-height:8px;color:#0c0c0c;letter-spacing:0.3px;left:532.4px;transform-origin:0 0;transform:scaleX(0.836);">A livrer le</div>
<div class="a" style="left:668px;top:127px;width:80px;height:12px;background:#ffffff;border:1px solid #a3a9b4;border-radius:1.5px;box-sizing:border-box;box-shadow:inset 0 0 0 0.5px #e8e8e8;"></div>
<div class="a" style="left:737px;top:128px;width:10px;height:10px;background:linear-gradient(#e4e4e4,#d4d4d4);border-left:1px solid #c8c8c8;box-sizing:border-box;"></div>
<svg class="a" style="left:738.35px;top:129.75px" width="7.2" height="6.8" viewBox="0 0 7.2 6.8"><rect x="0.3" y="0.3" width="6.6" height="6.2" fill="#f8f8f8" stroke="#c4c4c4" stroke-width="0.5"/><rect x="0.3" y="0.3" width="6.6" height="1.5" fill="#1fa51f"/></svg>
<div class="a" style="top:143.90px;font-size:6.40px;line-height:8px;color:#0c0c0c;letter-spacing:0.3px;left:532.4px;transform-origin:0 0;transform:scaleX(0.836);">Délai de fabrication</div>
<div class="a" style="left:668px;top:141px;width:18px;height:12px;background:#ffffff;border:1px solid #a3a9b4;border-radius:1.5px;box-sizing:border-box;box-shadow:inset 0 0 0 0.5px #e8e8e8;"></div>
<div class="a" style="top:158.10px;font-size:6.40px;line-height:8px;color:#0c0c0c;letter-spacing:0.3px;left:532.4px;transform-origin:0 0;transform:scaleX(0.836);">à</div>
<div class="a" style="left:581px;top:156px;width:81px;height:11px;background:#ffffff;border:1px solid #a3a9b4;border-radius:1.5px;box-sizing:border-box;box-shadow:inset 0 0 0 0.5px #e8e8e8;"></div>
<div class="a" style="left:652px;top:157px;width:9px;height:9px;background:linear-gradient(#e6e6e6,#d2d2d2);border-left:1px solid #c8c8c8;box-sizing:border-box;"></div>
<svg class="a" style="left:653.35px;top:158.25px;" width="6.40" height="6.40" viewBox="0 0 8 8"><line x1="4.6" y1="4.6" x2="7.2" y2="7.2" stroke="#e89a2a" stroke-width="1.8" stroke-linecap="round"/><circle cx="3.3" cy="3.3" r="2.5" fill="#b8e6fa" stroke="#5f8fb5" stroke-width="0.7"/></svg>
<div class="a" style="left:668px;top:156px;width:80px;height:11px;background:#e4e4e4;border:1px solid #a3a9b4;border-radius:1.5px;box-sizing:border-box;box-shadow:inset 0 0 0 0.5px #e8e8e8;"></div>
<div class="a" style="top:157.80px;font-size:6.40px;line-height:8px;color:#33528f;letter-spacing:0.3px;left:670.4000000000001px;transform-origin:0 0;transform:scaleX(0.836);">37000 TOURS</div>
<div class="a" style="top:172.00px;font-size:6.40px;line-height:8px;color:#0c0c0c;letter-spacing:0.3px;left:532.4px;transform-origin:0 0;transform:scaleX(0.836);">par</div>
<div class="a" style="left:581px;top:170px;width:81px;height:11px;background:#ffffff;border:1px solid #a3a9b4;border-radius:1.5px;box-sizing:border-box;box-shadow:inset 0 0 0 0.5px #e8e8e8;"></div>
<div class="a" style="left:652px;top:171px;width:9px;height:9px;background:linear-gradient(#e6e6e6,#d2d2d2);border-left:1px solid #c8c8c8;box-sizing:border-box;"></div>
<svg class="a" style="left:653.35px;top:172.20px;" width="6.40" height="6.40" viewBox="0 0 8 8"><line x1="4.6" y1="4.6" x2="7.2" y2="7.2" stroke="#e89a2a" stroke-width="1.8" stroke-linecap="round"/><circle cx="3.3" cy="3.3" r="2.5" fill="#b8e6fa" stroke="#5f8fb5" stroke-width="0.7"/></svg>
<div class="a" style="left:668px;top:170px;width:80px;height:11px;background:#e4e4e4;border:1px solid #a3a9b4;border-radius:1.5px;box-sizing:border-box;box-shadow:inset 0 0 0 0.5px #e8e8e8;"></div>
<div class="a" style="left:6px;top:145px;width:208px;height:43px;border:1px solid #d3dcee;box-sizing:border-box;"></div>
<div class="a" style="left:10px;top:145px;width:36px;height:3px;background:#c5d7fc;"></div>
<div class="a" style="top:142.50px;font-size:7.30px;line-height:8px;color:#3470f4;letter-spacing:0.1px;-webkit-text-stroke:0.05px #3470f4;font-weight:bold;left:11.5px;transform-origin:0 0;transform:scaleX(0.8479494461483423);">Processus</div>
<div class="a" style="top:157.90px;font-size:6.40px;line-height:8px;color:#0c0c0c;letter-spacing:0.3px;left:11px;transform-origin:0 0;transform:scaleX(0.836);">Type de processus</div>
<div class="a" style="top:171.90px;font-size:6.40px;line-height:8px;color:#0c0c0c;letter-spacing:0.3px;left:11px;transform-origin:0 0;transform:scaleX(0.836);">Type de finition</div>
<div class="a" style="left:89px;top:156px;width:119px;height:11px;background:#dcfdfd;border-top:1px solid #7c7c7c;border-left:1px solid #7c7c7c;border-bottom:1px solid #f6f6f6;border-right:1px solid #f6f6f6;box-sizing:border-box;box-shadow:inset 1px 1px 0 #b4b4b4;"></div>
<div class="a" style="left:198px;top:157px;width:9px;height:9px;background:#f0f0f0;border-top:1px solid #fafafa;border-left:1px solid #fafafa;border-right:1px solid #9a9a9a;border-bottom:1px solid #9a9a9a;box-sizing:border-box;"></div>
<svg class="a" style="left:200.25px;top:159.88px" width="5" height="3" viewBox="0 0 5 3"><path d="M0.3 0.3 L4.7 0.3 L2.5 2.8 Z" fill="#000"/></svg>
<div class="a" style="top:157.88px;font-size:6.40px;line-height:8px;color:#0c0c0c;letter-spacing:0.1px;-webkit-text-stroke:0.05px #0c0c0c;font-weight:bold;left:91.60000000000001px;transform-origin:0 0;transform:scaleX(0.836);">Standard</div>
<div class="a" style="left:89px;top:170px;width:119px;height:11px;background:#e4e4e4;border-top:1px solid #7c7c7c;border-left:1px solid #7c7c7c;border-bottom:1px solid #f6f6f6;border-right:1px solid #f6f6f6;box-sizing:border-box;box-shadow:inset 1px 1px 0 #b4b4b4;"></div>
<div class="a" style="left:198px;top:171px;width:9px;height:9px;background:#f0f0f0;border-top:1px solid #fafafa;border-left:1px solid #fafafa;border-right:1px solid #9a9a9a;border-bottom:1px solid #9a9a9a;box-sizing:border-box;"></div>
<svg class="a" style="left:200.25px;top:173.95px" width="5" height="3" viewBox="0 0 5 3"><path d="M0.3 0.3 L4.7 0.3 L2.5 2.8 Z" fill="#9a9a9a"/></svg>
<div class="a" style="left:220px;top:145px;width:302px;height:43px;border:1px solid #d3dcee;box-sizing:border-box;"></div>
<div class="a" style="left:223px;top:145px;width:26px;height:3px;background:#c5d7fc;"></div>
<div class="a" style="top:142.50px;font-size:7.30px;line-height:8px;color:#3470f4;letter-spacing:0.1px;-webkit-text-stroke:0.05px #3470f4;font-weight:bold;left:225px;transform-origin:0 0;transform:scaleX(0.8124894443581838);">Produit</div>
<div class="a" style="left:224px;top:156px;width:74px;height:11px;background:#fddfaf;border:1px solid #4f8ed8;box-sizing:border-box;"></div>
<div class="a" style="left:288px;top:157px;width:9px;height:9px;background:linear-gradient(#e6e6e6,#d2d2d2);border-left:1px solid #c8c8c8;box-sizing:border-box;"></div>
<svg class="a" style="left:289.05px;top:158.23px;" width="6.40" height="6.40" viewBox="0 0 8 8"><line x1="4.6" y1="4.6" x2="7.2" y2="7.2" stroke="#e89a2a" stroke-width="1.8" stroke-linecap="round"/><circle cx="3.3" cy="3.3" r="2.5" fill="#b8e6fa" stroke="#5f8fb5" stroke-width="0.7"/></svg>
<div class="a" style="left:226px;top:158px;width:9px;height:7px;background:#3478d8;"></div>
<div class="a" style="top:157.80px;font-size:6.40px;line-height:8px;color:#ffffff;letter-spacing:0.3px;left:226.2px;transform-origin:0 0;transform:scaleX(0.836);">EM</div>
<div class="a" style="top:157.80px;font-size:6.40px;line-height:8px;color:#0c0c0c;letter-spacing:0.3px;left:305.6px;transform-origin:0 0;transform:scaleX(0.836);">Désignation 1</div>
<div class="a" style="top:171.90px;font-size:6.40px;line-height:8px;color:#0c0c0c;letter-spacing:0.3px;left:305.6px;transform-origin:0 0;transform:scaleX(0.836);">Désignation 2</div>
<div class="a" style="left:351px;top:156px;width:167px;height:11px;background:#dcfdfd;border:1px solid #a3a9b4;border-radius:1.5px;box-sizing:border-box;box-shadow:inset 0 0 0 0.5px #e8e8e8;"></div>
<div class="a" style="top:158.00px;font-size:6.40px;line-height:8px;color:#0c0c0c;letter-spacing:0.1px;-webkit-text-stroke:0.05px #0c0c0c;font-weight:bold;left:353.45px;transform-origin:0 0;transform:scaleX(0.836);">CARN 600X400X300</div>
<div class="a" style="left:351px;top:170px;width:167px;height:11px;background:#dcfdfd;border:1px solid #a3a9b4;border-radius:1.5px;box-sizing:border-box;box-shadow:inset 0 0 0 0.5px #e8e8e8;"></div>
<div class="a" style="top:172.10px;font-size:6.40px;line-height:8px;color:#0c0c0c;letter-spacing:0.3px;left:353.45px;transform-origin:0 0;transform:scaleX(0.836);">.</div>
<div class="a" style="left:758px;top:58px;width:277px;height:328px;border:1px solid #d3dcee;box-sizing:border-box;"></div>
<div class="a" style="left:761px;top:58px;width:74px;height:3px;background:#c5d7fc;"></div>
<div class="a" style="top:55.10px;font-size:7.30px;line-height:8px;color:#3470f4;letter-spacing:0.1px;-webkit-text-stroke:0.05px #3470f4;font-weight:bold;left:762.9px;transform-origin:0 0;transform:scaleX(0.8490665957898219);">Informations générales</div>
<div class="a" style="left:762px;top:66px;width:267px;height:310px;background:#fff;border:1px solid #a0a0a0;border-right-color:#d8d8d8;border-bottom-color:#d8d8d8;box-sizing:border-box;"></div>
<div class="a" style="left:763px;top:67px;width:256px;height:12px;background:#b5cdf4;border-bottom:1px solid #dcdcdc;box-sizing:border-box;"></div>
<div class="a" style="top:69.00px;font-size:6.40px;line-height:8px;color:#0c0c0c;letter-spacing:0.3px;left:764.6px;transform-origin:0 0;transform:scaleX(0.836);">Suivi du devis</div>
<div class="a" style="left:763px;top:79px;width:256px;height:11px;background:#fff;border-bottom:1px solid #dcdcdc;box-sizing:border-box;"></div>
<div class="a" style="top:80.40px;font-size:6.40px;line-height:8px;color:#0c0c0c;letter-spacing:0.3px;left:764.6px;transform-origin:0 0;transform:scaleX(0.836);">Deviseur</div>
<div class="a" style="top:80.40px;font-size:6.40px;line-height:8px;color:#0c0c0c;letter-spacing:0.3px;left:823.3px;transform-origin:0 0;transform:scaleX(0.836);">ARD</div>
<div class="a" style="top:80.40px;font-size:6.40px;line-height:8px;color:#0c0c0c;letter-spacing:0.3px;left:869.4px;transform-origin:0 0;transform:scaleX(0.836);">Volume Software</div>
<div class="a" style="left:763px;top:90px;width:256px;height:11px;background:#e0e0e0;border-bottom:1px solid #dcdcdc;box-sizing:border-box;"></div>
<div class="a" style="top:91.80px;font-size:6.40px;line-height:8px;color:#0c0c0c;letter-spacing:0.3px;left:764.6px;transform-origin:0 0;transform:scaleX(0.836);">Fabricant</div>
<div class="a" style="left:763px;top:101px;width:256px;height:12px;background:#fff;border-bottom:1px solid #dcdcdc;box-sizing:border-box;"></div>
<div class="a" style="top:103.20px;font-size:6.40px;line-height:8px;color:#0c0c0c;letter-spacing:0.3px;left:764.6px;transform-origin:0 0;transform:scaleX(0.836);">Suivi</div>
<div class="a" style="top:103.20px;font-size:6.40px;line-height:8px;color:#0c0c0c;letter-spacing:0.3px;left:823.3px;transform-origin:0 0;transform:scaleX(0.836);">015</div>
<div class="a" style="top:103.20px;font-size:6.40px;line-height:8px;color:#0c0c0c;letter-spacing:0.3px;left:869.4px;transform-origin:0 0;transform:scaleX(0.836);">IVT</div>
<div class="a" style="left:763px;top:113px;width:256px;height:11px;background:#fff;border-bottom:1px solid #dcdcdc;box-sizing:border-box;"></div>
<div class="a" style="top:114.60px;font-size:6.40px;line-height:8px;color:#0c0c0c;letter-spacing:0.3px;left:764.6px;transform-origin:0 0;transform:scaleX(0.836);">Signataire</div>
<div class="a" style="left:763px;top:124px;width:256px;height:12px;background:#b5cdf4;border-bottom:1px solid #dcdcdc;box-sizing:border-box;"></div>
<div class="a" style="top:126.00px;font-size:6.40px;line-height:8px;color:#0c0c0c;letter-spacing:0.3px;left:764.6px;transform-origin:0 0;transform:scaleX(0.836);">Informations tarif</div>
<div class="a" style="left:763px;top:136px;width:256px;height:11px;background:#fff;border-bottom:1px solid #dcdcdc;box-sizing:border-box;"></div>
<div class="a" style="top:137.40px;font-size:6.40px;line-height:8px;color:#0c0c0c;letter-spacing:0.3px;left:764.6px;transform-origin:0 0;transform:scaleX(0.836);">Tarif</div>
<div class="a" style="top:137.40px;font-size:6.40px;line-height:8px;color:#0c0c0c;letter-spacing:0.3px;left:823.3px;transform-origin:0 0;transform:scaleX(0.836);">#CE</div>
<div class="a" style="top:137.40px;font-size:6.40px;line-height:8px;color:#0c0c0c;letter-spacing:0.3px;left:869.4px;transform-origin:0 0;transform:scaleX(0.836);">Tarif cession</div>
<div class="a" style="left:763px;top:147px;width:256px;height:11px;background:#fff;border-bottom:1px solid #dcdcdc;box-sizing:border-box;"></div>
<div class="a" style="top:148.80px;font-size:6.40px;line-height:8px;color:#0c0c0c;letter-spacing:0.3px;left:764.6px;transform-origin:0 0;transform:scaleX(0.836);">Prix au</div>
<div class="a" style="top:148.80px;font-size:6.40px;line-height:8px;color:#0c0c0c;letter-spacing:0.3px;left:823.3px;transform-origin:0 0;transform:scaleX(0.836);">MIL</div>
<div class="a" style="top:148.80px;font-size:6.40px;line-height:8px;color:#0c0c0c;letter-spacing:0.3px;left:869.4px;transform-origin:0 0;transform:scaleX(0.836);">Mille</div>
<div class="a" style="left:763px;top:158px;width:256px;height:12px;background:#fff;border-bottom:1px solid #dcdcdc;box-sizing:border-box;"></div>
<div class="a" style="top:160.20px;font-size:6.40px;line-height:8px;color:#0c0c0c;letter-spacing:0.3px;left:764.6px;transform-origin:0 0;transform:scaleX(0.836);">Validité du</div>
<div class="a" style="top:160.20px;font-size:6.40px;line-height:8px;color:#0c0c0c;letter-spacing:0.3px;left:823.3px;transform-origin:0 0;transform:scaleX(0.836);">09/01/2020</div>
<div class="a" style="left:763px;top:170px;width:256px;height:11px;background:#fff;border-bottom:1px solid #dcdcdc;box-sizing:border-box;"></div>
<div class="a" style="top:171.60px;font-size:6.40px;line-height:8px;color:#0c0c0c;letter-spacing:0.3px;left:764.6px;transform-origin:0 0;transform:scaleX(0.836);">Taux</div>
<div class="a" style="top:171.60px;font-size:6.40px;line-height:8px;color:#0c0c0c;letter-spacing:0.3px;left:823.3px;transform-origin:0 0;transform:scaleX(0.836);">1.00</div>
<div class="a" style="left:763px;top:181px;width:256px;height:12px;background:#fff;border-bottom:1px solid #dcdcdc;box-sizing:border-box;"></div>
<div class="a" style="top:183.00px;font-size:6.40px;line-height:8px;color:#0c0c0c;letter-spacing:0.3px;left:764.6px;transform-origin:0 0;transform:scaleX(0.836);">Cde Ouverte ?</div>
<div class="a" style="left:763px;top:193px;width:256px;height:11px;background:#fff;border-bottom:1px solid #dcdcdc;box-sizing:border-box;"></div>
<div class="a" style="left:763px;top:204px;width:256px;height:11px;background:#fff;border-bottom:1px solid #dcdcdc;box-sizing:border-box;"></div>
<div class="a" style="left:763px;top:215px;width:256px;height:12px;background:#fff;border-bottom:1px solid #dcdcdc;box-sizing:border-box;"></div>
<div class="a" style="left:763px;top:227px;width:256px;height:11px;background:#fff;border-bottom:1px solid #dcdcdc;box-sizing:border-box;"></div>
<div class="a" style="left:763px;top:238px;width:256px;height:12px;background:#fff;border-bottom:1px solid #dcdcdc;box-sizing:border-box;"></div>
<div class="a" style="left:763px;top:250px;width:256px;height:11px;background:#fff;border-bottom:1px solid #dcdcdc;box-sizing:border-box;"></div>
<div class="a" style="left:763px;top:261px;width:256px;height:11px;background:#fff;border-bottom:1px solid #dcdcdc;box-sizing:border-box;"></div>
<div class="a" style="left:763px;top:272px;width:256px;height:12px;background:#fff;border-bottom:1px solid #dcdcdc;box-sizing:border-box;"></div>
<div class="a" style="left:763px;top:284px;width:256px;height:11px;background:#fff;border-bottom:1px solid #dcdcdc;box-sizing:border-box;"></div>
<div class="a" style="left:763px;top:295px;width:256px;height:12px;background:#fff;border-bottom:1px solid #dcdcdc;box-sizing:border-box;"></div>
<div class="a" style="left:763px;top:307px;width:256px;height:11px;background:#fff;border-bottom:1px solid #dcdcdc;box-sizing:border-box;"></div>
<div class="a" style="left:763px;top:318px;width:256px;height:11px;background:#fff;border-bottom:1px solid #dcdcdc;box-sizing:border-box;"></div>
<div class="a" style="left:763px;top:329px;width:256px;height:12px;background:#fff;border-bottom:1px solid #dcdcdc;box-sizing:border-box;"></div>
<div class="a" style="left:763px;top:341px;width:256px;height:11px;background:#fff;border-bottom:1px solid #dcdcdc;box-sizing:border-box;"></div>
<div class="a" style="left:763px;top:352px;width:256px;height:11px;background:#fff;border-bottom:1px solid #dcdcdc;box-sizing:border-box;"></div>
<div class="a" style="left:763px;top:363px;width:256px;height:11px;background:#fff;border-bottom:1px solid #dcdcdc;box-sizing:border-box;"></div>
<div class="a" style="left:821px;top:67px;width:1px;height:308px;background:#dcdcdc;"></div>
<div class="a" style="left:867px;top:67px;width:1px;height:308px;background:#dcdcdc;"></div>
<div class="a" style="left:1019px;top:67px;width:9px;height:308px;background:#efefef;"></div>
<svg class="a" style="left:1021px;top:70px" width="5" height="3" viewBox="0 0 5 3"><path d="M0.5 2.5 L2.5 0.6 L4.5 2.5" fill="none" stroke="#888" stroke-width="0.6"/></svg>
<svg class="a" style="left:1021px;top:369px" width="5" height="3" viewBox="0 0 5 3"><path d="M0.5 0.5 L2.5 2.4 L4.5 0.5" fill="none" stroke="#888" stroke-width="0.6"/></svg>
<div class="a" style="left:758px;top:393px;width:277px;height:154px;border:1px solid #d3dcee;box-sizing:border-box;"></div>
<div class="a" style="left:760px;top:393px;width:70px;height:3px;background:#c5d7fc;"></div>
<div class="a" style="top:390.10px;font-size:7.30px;line-height:8px;color:#3470f4;letter-spacing:0.1px;-webkit-text-stroke:0.05px #3470f4;font-weight:bold;left:762.4px;transform-origin:0 0;transform:scaleX(0.814413442928155);">Images FEFCO/Artios</div>
<div class="a" style="left:762px;top:401px;width:267px;height:139px;background:#fff;"></div>
<svg class="a" style="left:0;top:0" width="1040" height="564"><polyline points="791.84,436.48 809.70,462.03" fill="none" stroke="#3a3a3a" stroke-width="0.6"/><polyline points="791.84,436.48 894.07,408.19 908.21,433.00" fill="none" stroke="#3a3a3a" stroke-width="0.6"/><polyline points="809.70,462.03 908.21,433.00" fill="none" stroke="#3a3a3a" stroke-width="0.6"/><polyline points="809.70,462.03 878.44,483.13 973.97,449.13 999.53,465.76 907.72,502.23 878.44,483.13" fill="none" stroke="#3a3a3a" stroke-width="0.6"/><polyline points="908.21,433.00 973.97,449.13" fill="none" stroke="#3a3a3a" stroke-width="0.6"/><polyline points="846.92,451.36 908.21,471.96" fill="none" stroke="#3a3a3a" stroke-width="0.6"/><polyline points="878.44,442.18 943.70,460.30" fill="none" stroke="#3a3a3a" stroke-width="0.6"/><polyline points="908.21,449.63 908.21,471.96" fill="none" stroke="#3a3a3a" stroke-width="0.6"/><polyline points="809.70,462.03 809.70,507.20 878.44,533.25 878.44,483.13" fill="none" stroke="#3a3a3a" stroke-width="0.6"/><polyline points="878.44,533.25 975.96,493.55 975.96,474.44" fill="none" stroke="#3a3a3a" stroke-width="0.6"/><polyline points="809.70,507.20 832.53,528.29 851.89,522.08" fill="none" stroke="#3a3a3a" stroke-width="0.6"/><polyline points="840.22,532.01 878.44,533.25" fill="none" stroke="#3a3a3a" stroke-width="0.6"/><polyline points="840.22,532.01 855.61,525.81" fill="none" stroke="#3a3a3a" stroke-width="0.6"/></svg>
<div class="a" style="top:484.40px;font-size:5.60px;line-height:8px;color:#111;letter-spacing:0.3px;-webkit-text-stroke:0.25px #111;left:803.3px;transform-origin:0 0;">H</div>
<div class="a" style="top:509.70px;font-size:5.60px;line-height:8px;color:#111;letter-spacing:0.3px;-webkit-text-stroke:0.25px #111;left:843.2px;transform-origin:0 0;">B</div>
<div class="a" style="top:511.70px;font-size:5.60px;line-height:8px;color:#111;letter-spacing:0.3px;-webkit-text-stroke:0.25px #111;left:934px;transform-origin:0 0;">L</div>
<div class="a" style="left:6px;top:195px;width:198px;height:352px;border:1px solid #d3dcee;box-sizing:border-box;"></div>
<div class="a" style="left:8px;top:195px;width:21px;height:3px;background:#c5d7fc;"></div>
<div class="a" style="top:192.20px;font-size:7.30px;line-height:8px;color:#3470f4;letter-spacing:0.1px;-webkit-text-stroke:0.05px #3470f4;font-weight:bold;left:10px;transform-origin:0 0;transform:scaleX(0.8262717625578986);">Menu</div>
<div class="a" style="left:10px;top:201px;width:173px;height:279px;background:#fff;border:1px solid #9a9a9a;border-right-color:#c8c8c8;border-bottom-color:#c8c8c8;box-sizing:border-box;"></div>
<div class="a" style="left:173px;top:202px;width:9px;height:277px;background:#efefef;"></div>
<svg class="a" style="left:175px;top:205px" width="5" height="3" viewBox="0 0 5 3"><path d="M0.5 2.5 L2.5 0.6 L4.5 2.5" fill="none" stroke="#aaa" stroke-width="0.6"/></svg>
<svg class="a" style="left:175px;top:473px" width="5" height="3" viewBox="0 0 5 3"><path d="M0.5 0.5 L2.5 2.4 L4.5 0.5" fill="none" stroke="#aaa" stroke-width="0.6"/></svg>
<div class="a" style="left:21px;top:202px;width:153px;height:9px;background:#d9d9d9;"></div>
<div class="a" style="left:32px;top:229px;width:142px;height:10px;background:#fdfbb8;"></div>
<div class="a" style="left:32px;top:247px;width:142px;height:10px;background:#fdfbb8;"></div>
<svg class="a" style="left:13.4px;top:203.4px" width="5" height="5" viewBox="0 0 5 5"><path d="M0.6 1.3 L2.5 3.2 L4.4 1.3" fill="none" stroke="#3a3a3a" stroke-width="0.9"/></svg>
<svg class="a" style="left:13.4px;top:221.7px" width="5" height="5" viewBox="0 0 5 5"><path d="M0.6 1.3 L2.5 3.2 L4.4 1.3" fill="none" stroke="#3a3a3a" stroke-width="0.9"/></svg>
<svg class="a" style="left:13.4px;top:240.3px" width="5" height="5" viewBox="0 0 5 5"><path d="M0.6 1.3 L2.5 3.2 L4.4 1.3" fill="none" stroke="#3a3a3a" stroke-width="0.9"/></svg>
<svg class="a" style="left:14.399999999999999px;top:258.9px" width="5" height="5" viewBox="0 0 5 5"><path d="M1.3 0.6 L3.2 2.5 L1.3 4.4" fill="none" stroke="#3a3a3a" stroke-width="0.9"/></svg>
<svg class="a" style="left:23px;top:201.5px" width="9" height="9" viewBox="0 0 9 9"><path d="M4.5 0.5 L8.5 2.3 L8.5 6.8 L4.5 8.6 L0.5 6.8 L0.5 2.3 Z" fill="#c8d4b0" stroke="#9aa888" stroke-width="0.5"/><path d="M0.5 2.3 L4.5 4.2 L8.5 2.3 M4.5 4.2 L4.5 8.6" fill="none" stroke="#9aa888" stroke-width="0.5"/></svg>
<div class="a" style="top:202.20px;font-size:6.40px;line-height:8px;color:#0c0c0c;letter-spacing:0.3px;left:35px;transform-origin:0 0;transform:scaleX(0.8455158041203303);">Liste des variantes de quantité</div>
<div class="a" style="left:37px;top:213px;width:3px;height:4px;background:#5cb85c;border-radius:50%;"></div>
<div class="a" style="top:211.20px;font-size:6.40px;line-height:8px;color:#0c0c0c;letter-spacing:0.3px;left:46px;transform-origin:0 0;transform:scaleX(0.836);">600</div>
<div class="a" style="top:220.50px;font-size:6.40px;line-height:8px;color:#0c0c0c;letter-spacing:0.3px;left:23.4px;transform-origin:0 0;transform:scaleX(0.836);">Liste des entités</div>
<div class="a" style="left:37px;top:232px;width:3px;height:3px;background:#5cb85c;border-radius:50%;"></div>
<div class="a" style="top:229.70px;font-size:6.40px;line-height:8px;color:#0c0c0c;letter-spacing:0.3px;left:46px;transform-origin:0 0;transform:scaleX(0.8375504833791282);">TRF - Transformation</div>
<svg class="a" style="left:23px;top:238.5px" width="9" height="9" viewBox="0 0 9 9"><rect x="3.5" y="0.5" width="2" height="2" fill="#4a8ad8"/><path d="M4.5 2.5 L4.5 4.5 M1.5 4.5 L7.5 4.5 M1.5 4.5 L1.5 6 M4.5 4.5 L4.5 6 M7.5 4.5 L7.5 6" stroke="#777" stroke-width="0.4"/><rect x="0.3" y="6" width="2.4" height="2" fill="#3aa83a"/><rect x="3.3" y="6" width="2.4" height="2" fill="#3aa83a"/><rect x="6.3" y="6" width="2.4" height="2" fill="#3aa83a"/></svg>
<div class="a" style="top:239.10px;font-size:6.40px;line-height:8px;color:#0c0c0c;letter-spacing:0.3px;left:35px;transform-origin:0 0;transform:scaleX(0.836);">Nomenclature</div>
<svg class="a" style="left:33.5px;top:247.5px" width="9.5" height="9" viewBox="0 0 9.5 9"><ellipse cx="4.75" cy="6.3" rx="4.3" ry="2.3" fill="#d8d8d8" stroke="#999" stroke-width="0.4"/><ellipse cx="4.75" cy="4.3" rx="4.3" ry="2.6" fill="#e8892a"/><circle cx="3" cy="3.5" r="1" fill="#f4b060"/><circle cx="6.3" cy="3.5" r="1" fill="#f4b060"/><circle cx="4.7" cy="5.2" r="1" fill="#f4b060"/></svg>
<div class="a" style="top:248.20px;font-size:6.40px;line-height:8px;color:#0c0c0c;letter-spacing:0.3px;left:46px;transform-origin:0 0;transform:scaleX(0.7996765923725163);">600 x PS : PRODUIT SIMPLE PAR DEFAUT(E0...</div>
<svg class="a" style="left:24px;top:257px" width="7" height="9" viewBox="0 0 7 9"><rect x="0.5" y="0.5" width="6" height="8" fill="#f4f4f4" stroke="#888" stroke-width="0.5"/><rect x="0.5" y="0.5" width="6" height="1.8" fill="#4a7ad0"/><path d="M1.5 4 L5.5 4 M1.5 5.5 L5.5 5.5 M1.5 7 L5.5 7" stroke="#bbb" stroke-width="0.4"/></svg>
<div class="a" style="top:257.70px;font-size:6.40px;line-height:8px;color:#0c0c0c;letter-spacing:0.3px;left:35px;transform-origin:0 0;transform:scaleX(0.8495089131008967);">Récapitulatif des coûts</div>
<svg class="a" style="left:188px;top:202.8px" width="8.5" height="8.5" viewBox="0 0 9 9"><circle cx="4.5" cy="4.5" r="4.1" fill="#2f7ee0" stroke="#1a5fb8" stroke-width="0.4"/><path d="M2.6 6.4 L3 5 L5.8 2.2 L6.8 3.2 L4 6 Z" fill="#fff"/></svg>
<svg class="a" style="left:188px;top:218.8px" width="8.5" height="8.5" viewBox="0 0 9 9"><circle cx="4.5" cy="4.5" r="4.1" fill="#24b024" stroke="#168a16" stroke-width="0.4"/><path d="M4.5 2 L4.5 7 M2 4.5 L7 4.5" stroke="#fff" stroke-width="1.5"/></svg>
<svg class="a" style="left:188px;top:235.4px" width="8.5" height="8.5" viewBox="0 0 9 9"><circle cx="4.5" cy="4.5" r="4.1" fill="#e84020" stroke="#b82a10" stroke-width="0.4"/><path d="M2.8 2.8 L6.2 6.2 M6.2 2.8 L2.8 6.2" stroke="#fff" stroke-width="1.3"/></svg>
<div class="a" style="left:10px;top:482px;width:173px;height:60px;background:#fff;border:1px solid #9a9a9a;border-right-color:#c8c8c8;border-bottom-color:#c8c8c8;box-sizing:border-box;"></div>
<div class="a" style="left:172px;top:483px;width:10px;height:58px;background:#efefef;"></div>
<svg class="a" style="left:174.5px;top:486px" width="5" height="3" viewBox="0 0 5 3"><path d="M0.5 2.5 L2.5 0.6 L4.5 2.5" fill="none" stroke="#aaa" stroke-width="0.6"/></svg>
<svg class="a" style="left:174.5px;top:535px" width="5" height="3" viewBox="0 0 5 3"><path d="M0.5 0.5 L2.5 2.4 L4.5 0.5" fill="none" stroke="#aaa" stroke-width="0.6"/></svg>
<div class="a" style="left:11px;top:484px;width:162px;height:11px;background:#fff;"></div>
<div class="a" style="top:485.90px;font-size:6.40px;line-height:8px;color:#0c0c0c;letter-spacing:0.3px;left:12.8px;transform-origin:0 0;transform:scaleX(0.836);">Données</div>
<div class="a" style="top:485.90px;font-size:6.40px;line-height:8px;color:#0c0c0c;letter-spacing:0.3px;left:68px;transform-origin:0 0;transform:scaleX(0.836);">Valeur</div>
<div class="a" style="left:11px;top:495px;width:162px;height:10px;background:#e2e2e2;"></div>
<div class="a" style="top:495.90px;font-size:6.40px;line-height:8px;color:#0c0c0c;letter-spacing:0.3px;left:12.8px;transform-origin:0 0;transform:scaleX(0.836);">Entité 1</div>
<div class="a" style="top:495.90px;font-size:6.40px;line-height:8px;color:#0c0c0c;letter-spacing:0.3px;left:68px;transform-origin:0 0;transform:scaleX(0.836);">TRF - Transformation</div>
<div class="a" style="left:11px;top:505px;width:162px;height:9px;background:#fff;border-bottom:1px solid #dedede;box-sizing:border-box;"></div>
<div class="a" style="top:505.25px;font-size:6.40px;line-height:8px;color:#0c0c0c;letter-spacing:0.3px;left:12.8px;transform-origin:0 0;transform:scaleX(0.836);">Site : THO</div>
<div class="a" style="left:11px;top:514px;width:162px;height:9px;background:#fff;border-bottom:1px solid #dedede;box-sizing:border-box;"></div>
<div class="a" style="top:514.25px;font-size:6.40px;line-height:8px;color:#0c0c0c;letter-spacing:0.3px;left:12.8px;transform-origin:0 0;transform:scaleX(0.836);">Coefficient</div>
<div class="a" style="top:514.25px;font-size:6.40px;line-height:8px;color:#0c0c0c;letter-spacing:0.3px;left:68px;transform-origin:0 0;transform:scaleX(0.836);">1.00</div>
<div class="a" style="left:11px;top:523px;width:162px;height:9px;background:#fff;border-bottom:1px solid #dedede;box-sizing:border-box;"></div>
<div class="a" style="top:523.60px;font-size:6.40px;line-height:8px;color:#0c0c0c;letter-spacing:0.3px;left:12.8px;transform-origin:0 0;transform:scaleX(0.836);">Quantité</div>
<div class="a" style="top:523.60px;font-size:6.40px;line-height:8px;color:#0c0c0c;letter-spacing:0.3px;left:68px;transform-origin:0 0;transform:scaleX(0.836);">600</div>
<div class="a" style="left:11px;top:532px;width:162px;height:9px;background:#fff;"></div>
<div class="a" style="top:532.75px;font-size:6.40px;line-height:8px;color:#0c0c0c;letter-spacing:0.3px;left:12.8px;transform-origin:0 0;transform:scaleX(0.836);">Non apparié</div>
<div class="a" style="top:532.75px;font-size:6.40px;line-height:8px;color:#0c0c0c;letter-spacing:0.3px;left:68px;transform-origin:0 0;transform:scaleX(0.836);">SYNCHRONE</div>
<div class="a" style="left:66px;top:483px;width:1px;height:58px;background:#dedede;"></div>
<div class="a" style="left:207px;top:203px;width:545px;height:344px;background:#c5d7fc;border:1px solid #fbfdff;border-top:none;box-sizing:border-box;"></div>
<div class="a" style="left:207px;top:203px;width:545px;height:1px;background:#fbfdff;"></div>
<div class="a" style="left:207px;top:191px;width:99px;height:14px;background:#ffffff;"></div>
<div class="a" style="top:193.80px;font-size:6.40px;line-height:8px;color:#0c0c0c;letter-spacing:0.3px;left:213px;transform-origin:0 0;transform:scaleX(0.8241707339014172);">Entité n°1 - Transformation - PS :</div>
<div class="a" style="left:305px;top:192px;width:31px;height:12px;background:#ececec;border-right:1px solid #d8d8d8;box-sizing:border-box;"></div>
<div class="a" style="top:194.10px;font-size:6.40px;line-height:8px;color:#0c0c0c;letter-spacing:0.3px;left:311.5px;transform-origin:0 0;transform:scaleX(0.7865283884895153);">FEFCO</div>
<div class="a" style="left:335px;top:192px;width:24px;height:12px;background:#ececec;"></div>
<div class="a" style="top:194.10px;font-size:6.40px;line-height:8px;color:#0c0c0c;letter-spacing:0.3px;left:342.5px;transform-origin:0 0;transform:scaleX(0.8358763221039713);">LCO</div>
<div class="a" style="left:211px;top:209px;width:233px;height:28px;border:1px solid #d3dcee;box-sizing:border-box;"></div>
<div class="a" style="left:214px;top:208px;width:15px;height:3px;background:#c5d7fc;"></div>
<div class="a" style="top:206.00px;font-size:6.40px;line-height:8px;color:#0c0c0c;letter-spacing:0.3px;left:216px;transform-origin:0 0;transform:scaleX(0.836);">Outil</div>
<div class="a" style="left:215px;top:218px;width:97px;height:12px;background:#ffffff;border:1px solid #a3a9b4;border-radius:1.5px;box-sizing:border-box;box-shadow:inset 0 0 0 0.5px #e8e8e8;"></div>
<div class="a" style="left:302px;top:219px;width:9px;height:10px;background:linear-gradient(#e6e6e6,#d2d2d2);border-left:1px solid #c8c8c8;box-sizing:border-box;"></div>
<svg class="a" style="left:303.15px;top:220.35px;" width="6.40" height="6.40" viewBox="0 0 8 8"><line x1="4.6" y1="4.6" x2="7.2" y2="7.2" stroke="#e89a2a" stroke-width="1.8" stroke-linecap="round"/><circle cx="3.3" cy="3.3" r="2.5" fill="#b8e6fa" stroke="#5f8fb5" stroke-width="0.7"/></svg>
<div class="a" style="top:220.05px;font-size:6.40px;line-height:8px;color:#6a1a3a;letter-spacing:0.3px;left:217.6px;transform-origin:0 0;transform:scaleX(0.836);">.</div>
<div class="a" style="left:320px;top:218px;width:119px;height:11px;background:#e4e4e4;border-top:1px solid #7c7c7c;border-left:1px solid #7c7c7c;border-bottom:1px solid #f6f6f6;border-right:1px solid #f6f6f6;box-sizing:border-box;box-shadow:inset 1px 1px 0 #b4b4b4;"></div>
<div class="a" style="left:429px;top:219px;width:9px;height:9px;background:#f0f0f0;border-top:1px solid #fafafa;border-left:1px solid #fafafa;border-right:1px solid #9a9a9a;border-bottom:1px solid #9a9a9a;box-sizing:border-box;"></div>
<svg class="a" style="left:430.60px;top:222.05px" width="5" height="3" viewBox="0 0 5 3"><path d="M0.3 0.3 L4.7 0.3 L2.5 2.8 Z" fill="#9a9a9a"/></svg>
<div class="a" style="top:220.05px;font-size:6.40px;line-height:8px;color:#33528f;letter-spacing:0.3px;left:322.45px;transform-origin:0 0;transform:scaleX(0.836);">VAL - Valide</div>
<div class="a" style="left:211px;top:244px;width:233px;height:35px;border:1px solid #d3dcee;box-sizing:border-box;"></div>
<div class="a" style="left:214px;top:243px;width:30px;height:3px;background:#c5d7fc;"></div>
<div class="a" style="top:241.00px;font-size:6.40px;line-height:8px;color:#0c0c0c;letter-spacing:0.3px;left:216px;transform-origin:0 0;transform:scaleX(0.836);">Plan Artios</div>
<div class="a" style="left:215px;top:252px;width:225px;height:14px;background:#ffffff;border:1px solid #a3a9b4;border-radius:1.5px;box-sizing:border-box;box-shadow:inset 0 0 0 0.5px #e8e8e8;"></div>
<div class="a" style="left:427px;top:253px;width:12px;height:12px;background:linear-gradient(#e8e8e8,#d4d4d4);"></div>
<svg class="a" style="left:428.5px;top:254.8px" width="8" height="8" viewBox="0 0 8 8"><path d="M0.8 1.5 L3.8 1 L3.8 7 L0.8 7.3 Z M4.2 1 L7.2 1.5 L7.2 7.3 L4.2 7 Z" fill="#f7f7f7" stroke="#9a9a9a" stroke-width="0.45"/></svg>
<div class="a" style="left:211px;top:286px;width:233px;height:35px;border:1px solid #d3dcee;box-sizing:border-box;"></div>
<div class="a" style="left:214px;top:286px;width:22px;height:3px;background:#c5d7fc;"></div>
<div class="a" style="top:283.10px;font-size:6.40px;line-height:8px;color:#0c0c0c;letter-spacing:0.3px;left:216px;transform-origin:0 0;transform:scaleX(0.836);">FEFCO</div>
<div class="a" style="left:215px;top:297px;width:62px;height:11px;background:#dcfdfd;border:1px solid #a3a9b4;border-radius:1.5px;box-sizing:border-box;box-shadow:inset 0 0 0 0.5px #e8e8e8;"></div>
<div class="a" style="left:267px;top:298px;width:9px;height:9px;background:linear-gradient(#e6e6e6,#d2d2d2);border-left:1px solid #c8c8c8;box-sizing:border-box;"></div>
<svg class="a" style="left:268.15px;top:299.18px;" width="6.40" height="6.40" viewBox="0 0 8 8"><line x1="4.6" y1="4.6" x2="7.2" y2="7.2" stroke="#e89a2a" stroke-width="1.8" stroke-linecap="round"/><circle cx="3.3" cy="3.3" r="2.5" fill="#b8e6fa" stroke="#5f8fb5" stroke-width="0.7"/></svg>
<div class="a" style="top:298.88px;font-size:6.40px;line-height:8px;color:#0c0c0c;letter-spacing:0.3px;left:217.79999999999998px;transform-origin:0 0;transform:scaleX(0.836);">201</div>
<div class="a" style="left:286px;top:297px;width:154px;height:11px;background:#e4e4e4;border:1px solid #a3a9b4;border-radius:1.5px;box-sizing:border-box;box-shadow:inset 0 0 0 0.5px #e8e8e8;"></div>
<div class="a" style="top:298.80px;font-size:6.40px;line-height:8px;color:#33528f;letter-spacing:0.3px;left:288.8px;transform-origin:0 0;transform:scaleX(0.836);">CAISSE AMERICAINE RABATS NORMAUX</div>
<div class="a" style="left:211px;top:329px;width:233px;height:47px;border:1px solid #d3dcee;box-sizing:border-box;"></div>
<div class="a" style="left:214px;top:328px;width:50px;height:3px;background:#c5d7fc;"></div>
<div class="a" style="top:325.60px;font-size:6.40px;line-height:8px;color:#0c0c0c;letter-spacing:0.3px;left:216px;transform-origin:0 0;transform:scaleX(0.836);">Dimensions interne</div>
<div class="a" style="top:339.05px;font-size:6.40px;line-height:8px;color:#0c0c0c;letter-spacing:0.3px;left:216px;transform-origin:0 0;transform:scaleX(0.836);">L x B x H</div>
<div class="a" style="left:286px;top:337px;width:41px;height:11px;background:#dcfdfd;border:1px solid #a3a9b4;border-radius:1.5px;box-sizing:border-box;box-shadow:inset 0 0 0 0.5px #e8e8e8;"></div>
<div class="a" style="top:339.00px;font-size:6.40px;line-height:8px;color:#0c0c0c;letter-spacing:0.3px;left:24.69999999999999px;width:300px;text-align:right;transform-origin:100% 0;transform:scaleX(0.836);">600.00</div>
<div class="a" style="top:339.20px;font-size:6.40px;line-height:8px;color:#0c0c0c;letter-spacing:0.3px;left:335.4px;transform-origin:0 0;transform:scaleX(0.836);">x</div>
<div class="a" style="left:346px;top:337px;width:37px;height:11px;background:#dcfdfd;border:1px solid #a3a9b4;border-radius:1.5px;box-sizing:border-box;box-shadow:inset 0 0 0 0.5px #e8e8e8;"></div>
<div class="a" style="top:339.00px;font-size:6.40px;line-height:8px;color:#0c0c0c;letter-spacing:0.3px;left:80.30000000000001px;width:300px;text-align:right;transform-origin:100% 0;transform:scaleX(0.836);">400.00</div>
<div class="a" style="top:339.20px;font-size:6.40px;line-height:8px;color:#0c0c0c;letter-spacing:0.3px;left:392.2px;transform-origin:0 0;transform:scaleX(0.836);">x</div>
<div class="a" style="left:403px;top:337px;width:37px;height:11px;background:#dcfdfd;border:1px solid #a3a9b4;border-radius:1.5px;box-sizing:border-box;box-shadow:inset 0 0 0 0.5px #e8e8e8;"></div>
<div class="a" style="top:339.00px;font-size:6.40px;line-height:8px;color:#0c0c0c;letter-spacing:0.3px;left:137.2px;width:300px;text-align:right;transform-origin:100% 0;transform:scaleX(0.836);">300.00</div>
<div class="a" style="left:215px;top:352px;width:7px;height:7px;background:#fff;border:1px solid #6e6e6e;box-sizing:border-box;"></div>
<div class="a" style="top:352.80px;font-size:6.40px;line-height:8px;color:#0c0c0c;letter-spacing:0.3px;left:225.4px;transform-origin:0 0;transform:scaleX(0.836);">Format HT</div>
<div class="a" style="left:286px;top:351px;width:41px;height:11px;background:#e4e4e4;border:1px solid #a3a9b4;border-radius:1.5px;box-sizing:border-box;box-shadow:inset 0 0 0 0.5px #e8e8e8;"></div>
<div class="a" style="top:352.93px;font-size:6.40px;line-height:8px;color:#33528f;letter-spacing:0.3px;left:24.69999999999999px;width:300px;text-align:right;transform-origin:100% 0;transform:scaleX(0.836);">724.00</div>
<div class="a" style="top:353.00px;font-size:6.40px;line-height:8px;color:#0c0c0c;letter-spacing:0.3px;left:335.4px;transform-origin:0 0;transform:scaleX(0.836);">x</div>
<div class="a" style="left:346px;top:351px;width:37px;height:11px;background:#e4e4e4;border:1px solid #a3a9b4;border-radius:1.5px;box-sizing:border-box;box-shadow:inset 0 0 0 0.5px #e8e8e8;"></div>
<div class="a" style="top:352.93px;font-size:6.40px;line-height:8px;color:#33528f;letter-spacing:0.3px;left:80.30000000000001px;width:300px;text-align:right;transform-origin:100% 0;transform:scaleX(0.836);">2059.00</div>
<div class="a" style="left:211px;top:383px;width:233px;height:48px;border:1px solid #d3dcee;box-sizing:border-box;"></div>
<div class="a" style="left:214px;top:382px;width:21px;height:3px;background:#c5d7fc;"></div>
<div class="a" style="top:379.70px;font-size:6.40px;line-height:8px;color:#0c0c0c;letter-spacing:0.3px;left:216px;transform-origin:0 0;transform:scaleX(0.836);">Qualité</div>
<div class="a" style="top:393.80px;font-size:6.40px;line-height:8px;color:#0c0c0c;letter-spacing:0.3px;left:216px;transform-origin:0 0;transform:scaleX(0.836);">Code</div>
<div class="a" style="left:269px;top:392px;width:89px;height:11px;background:#dcfdfd;border:1px solid #a3a9b4;border-radius:1.5px;box-sizing:border-box;box-shadow:inset 0 0 0 0.5px #e8e8e8;"></div>
<div class="a" style="left:348px;top:393px;width:9px;height:9px;background:linear-gradient(#e6e6e6,#d2d2d2);border-left:1px solid #c8c8c8;box-sizing:border-box;"></div>
<svg class="a" style="left:349.05px;top:394.30px;" width="6.40" height="6.40" viewBox="0 0 8 8"><line x1="4.6" y1="4.6" x2="7.2" y2="7.2" stroke="#e89a2a" stroke-width="1.8" stroke-linecap="round"/><circle cx="3.3" cy="3.3" r="2.5" fill="#b8e6fa" stroke="#5f8fb5" stroke-width="0.7"/></svg>
<div class="a" style="top:394.00px;font-size:6.40px;line-height:8px;color:#0c0c0c;letter-spacing:0.3px;left:271.3px;transform-origin:0 0;transform:scaleX(0.836);">QBE030</div>
<div class="a" style="top:408.20px;font-size:6.40px;line-height:8px;color:#0c0c0c;letter-spacing:0.3px;left:216px;transform-origin:0 0;transform:scaleX(0.836);">Désignation</div>
<div class="a" style="left:269px;top:406px;width:171px;height:11px;background:#ffffff;border:1px solid #a3a9b4;border-radius:1.5px;box-sizing:border-box;box-shadow:inset 0 0 0 0.5px #e8e8e8;"></div>
<div class="a" style="top:408.07px;font-size:6.40px;line-height:8px;color:#0c0c0c;letter-spacing:0.3px;left:271.3px;transform-origin:0 0;transform:scaleX(0.836);">BC30 TEST</div>
<div class="a" style="left:210px;top:434px;width:235px;height:87px;background:#dc9fdc;"></div>
<div class="a" style="left:211px;top:438px;width:233px;height:82px;border:1px solid #ebc6eb;box-sizing:border-box;"></div>
<div class="a" style="left:214px;top:437px;width:57px;height:3px;background:#dc9fdc;"></div>
<div class="a" style="top:435.00px;font-size:6.40px;line-height:8px;color:#0c0c0c;letter-spacing:0.3px;left:216px;transform-origin:0 0;transform:scaleX(0.836);">Format de tirage (MM)</div>
<div class="a" style="top:447.30px;font-size:6.40px;line-height:8px;color:#0c0c0c;letter-spacing:0.3px;left:264.75px;transform-origin:0 0;transform:scaleX(0.836);">Nb de poses</div>
<div class="a" style="top:447.30px;font-size:6.40px;line-height:8px;color:#0c0c0c;letter-spacing:0.3px;left:377.75px;transform-origin:0 0;transform:scaleX(0.836);">Formats</div>
<div class="a" style="top:460.30px;font-size:6.40px;line-height:8px;color:#0c0c0c;letter-spacing:0.3px;left:254.75px;transform-origin:0 0;transform:scaleX(0.836);">Laize</div>
<div class="a" style="top:460.30px;font-size:6.40px;line-height:8px;color:#0c0c0c;letter-spacing:0.3px;left:293px;transform-origin:0 0;transform:scaleX(0.836);">Coupe</div>
<div class="a" style="top:460.30px;font-size:6.40px;line-height:8px;color:#0c0c0c;letter-spacing:0.3px;left:352.75px;transform-origin:0 0;transform:scaleX(0.836);">Laize</div>
<div class="a" style="top:460.30px;font-size:6.40px;line-height:8px;color:#0c0c0c;letter-spacing:0.3px;left:407.9px;transform-origin:0 0;transform:scaleX(0.836);">Coupe</div>
<div class="a" style="top:473.95px;font-size:6.40px;line-height:8px;color:#0c0c0c;letter-spacing:0.3px;left:216px;transform-origin:0 0;transform:scaleX(0.836);">Découpe</div>
<div class="a" style="left:251px;top:472px;width:21px;height:12px;background:#ffffff;border:1px solid #a3a9b4;border-radius:1.5px;box-sizing:border-box;box-shadow:inset 0 0 0 0.5px #e8e8e8;"></div>
<div class="a" style="top:474.18px;font-size:6.40px;line-height:8px;color:#0c0c0c;letter-spacing:0.3px;left:-30.599999999999966px;width:300px;text-align:right;transform-origin:100% 0;transform:scaleX(0.836);">1</div>
<div class="a" style="top:474.15px;font-size:6.40px;line-height:8px;color:#0c0c0c;letter-spacing:0.3px;left:279.8px;transform-origin:0 0;transform:scaleX(0.836);">x</div>
<div class="a" style="left:291px;top:472px;width:21px;height:12px;background:#ffffff;border:1px solid #a3a9b4;border-radius:1.5px;box-sizing:border-box;box-shadow:inset 0 0 0 0.5px #e8e8e8;"></div>
<div class="a" style="top:474.18px;font-size:6.40px;line-height:8px;color:#0c0c0c;letter-spacing:0.3px;left:9.400000000000034px;width:300px;text-align:right;transform-origin:100% 0;transform:scaleX(0.836);">1</div>
<div class="a" style="left:325px;top:473px;width:7px;height:7px;background:#fff;border:1px solid #6e6e6e;box-sizing:border-box;"></div>
<div class="a" style="left:341px;top:472px;width:37px;height:12px;background:#e4e4e4;border:1px solid #a3a9b4;border-radius:1.5px;box-sizing:border-box;box-shadow:inset 0 0 0 0.5px #e8e8e8;"></div>
<div class="a" style="top:474.18px;font-size:6.40px;line-height:8px;color:#33528f;letter-spacing:0.3px;left:75.30000000000001px;width:300px;text-align:right;transform-origin:100% 0;transform:scaleX(0.836);">700</div>
<div class="a" style="top:474.15px;font-size:6.40px;line-height:8px;color:#0c0c0c;letter-spacing:0.3px;left:385.8px;transform-origin:0 0;transform:scaleX(0.836);">x</div>
<div class="a" style="left:398px;top:472px;width:37px;height:12px;background:#e4e4e4;border:1px solid #a3a9b4;border-radius:1.5px;box-sizing:border-box;box-shadow:inset 0 0 0 0.5px #e8e8e8;"></div>
<div class="a" style="top:474.18px;font-size:6.40px;line-height:8px;color:#33528f;letter-spacing:0.3px;left:132.2px;width:300px;text-align:right;transform-origin:100% 0;transform:scaleX(0.836);">2000</div>
<div class="a" style="top:489.30px;font-size:6.40px;line-height:8px;color:#0c0c0c;letter-spacing:0.3px;left:216px;transform-origin:0 0;transform:scaleX(0.836);">Impression</div>
<div class="a" style="left:251px;top:487px;width:21px;height:12px;background:#ffffff;border:1px solid #a3a9b4;border-radius:1.5px;box-sizing:border-box;box-shadow:inset 0 0 0 0.5px #e8e8e8;"></div>
<div class="a" style="top:489.53px;font-size:6.40px;line-height:8px;color:#0c0c0c;letter-spacing:0.3px;left:-30.599999999999966px;width:300px;text-align:right;transform-origin:100% 0;transform:scaleX(0.836);">1</div>
<div class="a" style="top:489.50px;font-size:6.40px;line-height:8px;color:#0c0c0c;letter-spacing:0.3px;left:279.8px;transform-origin:0 0;transform:scaleX(0.836);">x</div>
<div class="a" style="left:291px;top:487px;width:21px;height:12px;background:#ffffff;border:1px solid #a3a9b4;border-radius:1.5px;box-sizing:border-box;box-shadow:inset 0 0 0 0.5px #e8e8e8;"></div>
<div class="a" style="top:489.53px;font-size:6.40px;line-height:8px;color:#0c0c0c;letter-spacing:0.3px;left:9.400000000000034px;width:300px;text-align:right;transform-origin:100% 0;transform:scaleX(0.836);">1</div>
<div class="a" style="left:325px;top:488px;width:7px;height:7px;background:#fff;border:1px solid #6e6e6e;box-sizing:border-box;"></div>
<div class="a" style="left:341px;top:487px;width:37px;height:12px;background:#e4e4e4;border:1px solid #a3a9b4;border-radius:1.5px;box-sizing:border-box;box-shadow:inset 0 0 0 0.5px #e8e8e8;"></div>
<div class="a" style="top:489.53px;font-size:6.40px;line-height:8px;color:#33528f;letter-spacing:0.3px;left:75.30000000000001px;width:300px;text-align:right;transform-origin:100% 0;transform:scaleX(0.836);">700</div>
<div class="a" style="top:489.50px;font-size:6.40px;line-height:8px;color:#0c0c0c;letter-spacing:0.3px;left:385.8px;transform-origin:0 0;transform:scaleX(0.836);">x</div>
<div class="a" style="left:398px;top:487px;width:37px;height:12px;background:#e4e4e4;border:1px solid #a3a9b4;border-radius:1.5px;box-sizing:border-box;box-shadow:inset 0 0 0 0.5px #e8e8e8;"></div>
<div class="a" style="top:489.53px;font-size:6.40px;line-height:8px;color:#33528f;letter-spacing:0.3px;left:132.2px;width:300px;text-align:right;transform-origin:100% 0;transform:scaleX(0.836);">2000</div>
<div class="a" style="top:504.65px;font-size:6.40px;line-height:8px;color:#0c0c0c;letter-spacing:0.3px;left:216px;transform-origin:0 0;transform:scaleX(0.836);">Plaque</div>
<div class="a" style="left:251px;top:502px;width:21px;height:12px;background:#ffffff;border:1px solid #a3a9b4;border-radius:1.5px;box-sizing:border-box;box-shadow:inset 0 0 0 0.5px #e8e8e8;"></div>
<div class="a" style="top:504.88px;font-size:6.40px;line-height:8px;color:#0c0c0c;letter-spacing:0.3px;left:-30.599999999999966px;width:300px;text-align:right;transform-origin:100% 0;transform:scaleX(0.836);">1</div>
<div class="a" style="top:504.85px;font-size:6.40px;line-height:8px;color:#0c0c0c;letter-spacing:0.3px;left:279.8px;transform-origin:0 0;transform:scaleX(0.836);">x</div>
<div class="a" style="left:291px;top:502px;width:21px;height:12px;background:#ffffff;border:1px solid #a3a9b4;border-radius:1.5px;box-sizing:border-box;box-shadow:inset 0 0 0 0.5px #e8e8e8;"></div>
<div class="a" style="top:504.88px;font-size:6.40px;line-height:8px;color:#0c0c0c;letter-spacing:0.3px;left:9.400000000000034px;width:300px;text-align:right;transform-origin:100% 0;transform:scaleX(0.836);">1</div>
<div class="a" style="left:325px;top:504px;width:7px;height:7px;background:#fff;border:1px solid #6e6e6e;box-sizing:border-box;"></div>
<div class="a" style="left:341px;top:502px;width:37px;height:12px;background:#e4e4e4;border:1px solid #a3a9b4;border-radius:1.5px;box-sizing:border-box;box-shadow:inset 0 0 0 0.5px #e8e8e8;"></div>
<div class="a" style="top:504.88px;font-size:6.40px;line-height:8px;color:#33528f;letter-spacing:0.3px;left:75.30000000000001px;width:300px;text-align:right;transform-origin:100% 0;transform:scaleX(0.836);">700</div>
<div class="a" style="top:504.85px;font-size:6.40px;line-height:8px;color:#0c0c0c;letter-spacing:0.3px;left:385.8px;transform-origin:0 0;transform:scaleX(0.836);">x</div>
<div class="a" style="left:398px;top:502px;width:37px;height:12px;background:#e4e4e4;border:1px solid #a3a9b4;border-radius:1.5px;box-sizing:border-box;box-shadow:inset 0 0 0 0.5px #e8e8e8;"></div>
<div class="a" style="top:504.88px;font-size:6.40px;line-height:8px;color:#33528f;letter-spacing:0.3px;left:132.2px;width:300px;text-align:right;transform-origin:100% 0;transform:scaleX(0.836);">2000</div>
<div class="a" style="left:448px;top:205px;width:246px;height:32px;background:#dc9fdc;"></div>
<div class="a" style="left:450px;top:209px;width:244px;height:28px;border:1px solid #ebc6eb;box-sizing:border-box;"></div>
<div class="a" style="left:453px;top:208px;width:56px;height:3px;background:#dc9fdc;"></div>
<div class="a" style="top:206.00px;font-size:6.40px;line-height:8px;color:#0c0c0c;letter-spacing:0.3px;left:455px;transform-origin:0 0;transform:scaleX(0.836);">Réapprovisionnement</div>
<div class="a" style="top:220.05px;font-size:6.40px;line-height:8px;color:#0c0c0c;letter-spacing:0.3px;left:455px;transform-origin:0 0;transform:scaleX(0.836);">Mode</div>
<div class="a" style="left:525px;top:218px;width:141px;height:12px;background:#ffffff;border-top:1px solid #7c7c7c;border-left:1px solid #7c7c7c;border-bottom:1px solid #f6f6f6;border-right:1px solid #f6f6f6;box-sizing:border-box;box-shadow:inset 1px 1px 0 #b4b4b4;"></div>
<div class="a" style="left:656px;top:219px;width:9px;height:10px;background:#f0f0f0;border-top:1px solid #fafafa;border-left:1px solid #fafafa;border-right:1px solid #9a9a9a;border-bottom:1px solid #9a9a9a;box-sizing:border-box;"></div>
<svg class="a" style="left:657.75px;top:222.25px" width="5" height="3" viewBox="0 0 5 3"><path d="M0.3 0.3 L4.7 0.3 L2.5 2.8 Z" fill="#000"/></svg>
<div class="a" style="top:220.25px;font-size:6.40px;line-height:8px;color:#0c0c0c;letter-spacing:0.3px;left:527.2px;transform-origin:0 0;transform:scaleX(0.836);">C - A commander</div>
<svg class="a" style="left:676.00px;top:217.80px" width="10.40" height="10.40" viewBox="0 0 8 8"><line x1="4.9" y1="4.9" x2="6.9" y2="6.9" stroke="#dca234" stroke-width="1.3" stroke-linecap="round"/><circle cx="3.4" cy="3.4" r="2.6" fill="rgba(255,255,255,0.45)" stroke="#7e8aa2" stroke-width="0.6"/></svg>
<div class="a" style="left:448px;top:240px;width:246px;height:94px;background:#dc9fdc;"></div>
<div class="a" style="left:451px;top:244px;width:243px;height:90px;border:1px solid #ebc6eb;box-sizing:border-box;"></div>
<div class="a" style="left:453px;top:243px;width:34px;height:3px;background:#dc9fdc;"></div>
<div class="a" style="top:241.00px;font-size:6.40px;line-height:8px;color:#0c0c0c;letter-spacing:0.3px;left:455px;transform-origin:0 0;transform:scaleX(0.836);">Carton (MM)</div>
<div class="a" style="left:454px;top:254px;width:7px;height:7px;background:#fff;border:1px solid #6e6e6e;box-sizing:border-box;"></div>
<div class="a" style="top:255.30px;font-size:6.40px;line-height:8px;color:#0c0c0c;letter-spacing:0.3px;left:464.1px;transform-origin:0 0;transform:scaleX(0.836);">Fournisseur</div>
<div class="a" style="left:525px;top:253px;width:40px;height:12px;background:#e4e4e4;border:1px solid #a3a9b4;border-radius:1.5px;box-sizing:border-box;box-shadow:inset 0 0 0 0.5px #e8e8e8;"></div>
<div class="a" style="left:555px;top:254px;width:9px;height:10px;background:linear-gradient(#e6e6e6,#d2d2d2);border-left:1px solid #c8c8c8;box-sizing:border-box;"></div>
<svg class="a" style="left:556.15px;top:255.73px;opacity:0.35;" width="6.40" height="6.40" viewBox="0 0 8 8"><line x1="4.6" y1="4.6" x2="7.2" y2="7.2" stroke="#e89a2a" stroke-width="1.8" stroke-linecap="round"/><circle cx="3.3" cy="3.3" r="2.5" fill="#b8e6fa" stroke="#5f8fb5" stroke-width="0.7"/></svg>
<div class="a" style="left:573px;top:253px;width:115px;height:12px;background:#e4e4e4;border:1px solid #a3a9b4;border-radius:1.5px;box-sizing:border-box;box-shadow:inset 0 0 0 0.5px #e8e8e8;"></div>
<div class="a" style="left:454px;top:270px;width:7px;height:7px;background:#fff;border:1px solid #6e6e6e;box-sizing:border-box;"></div>
<div class="a" style="top:270.70px;font-size:6.40px;line-height:8px;color:#0c0c0c;letter-spacing:0.3px;left:464.1px;transform-origin:0 0;transform:scaleX(0.836);">Prix matière</div>
<div class="a" style="left:525px;top:268px;width:67px;height:12px;background:#e4e4e4;border:1px solid #a3a9b4;border-radius:1.5px;box-sizing:border-box;box-shadow:inset 0 0 0 0.5px #e8e8e8;"></div>
<div class="a" style="top:270.38px;font-size:6.40px;line-height:8px;color:#33528f;letter-spacing:0.3px;left:289.0px;width:300px;text-align:right;transform-origin:100% 0;transform:scaleX(0.836);">479.00</div>
<div class="a" style="left:600px;top:269px;width:88px;height:11px;background:#e4e4e4;border-top:1px solid #7c7c7c;border-left:1px solid #7c7c7c;border-bottom:1px solid #f6f6f6;border-right:1px solid #f6f6f6;box-sizing:border-box;box-shadow:inset 1px 1px 0 #b4b4b4;"></div>
<div class="a" style="left:678px;top:270px;width:9px;height:9px;background:#f0f0f0;border-top:1px solid #fafafa;border-left:1px solid #fafafa;border-right:1px solid #9a9a9a;border-bottom:1px solid #9a9a9a;box-sizing:border-box;"></div>
<svg class="a" style="left:679.50px;top:272.65px" width="5" height="3" viewBox="0 0 5 3"><path d="M0.3 0.3 L4.7 0.3 L2.5 2.8 Z" fill="#9a9a9a"/></svg>
<div class="a" style="top:270.65px;font-size:6.40px;line-height:8px;color:#33528f;letter-spacing:0.3px;left:602.3000000000001px;transform-origin:0 0;transform:scaleX(0.836);">MM2 - Mille m²</div>
<div class="a" style="left:454px;top:284px;width:7px;height:7px;background:#fff;border:1px solid #6e6e6e;box-sizing:border-box;"></div>
<div class="a" style="top:284.80px;font-size:6.40px;line-height:8px;color:#0c0c0c;letter-spacing:0.3px;left:464.1px;transform-origin:0 0;transform:scaleX(0.836);">Nb plaques</div>
<div class="a" style="left:525px;top:283px;width:67px;height:11px;background:#e4e4e4;border:1px solid #a3a9b4;border-radius:1.5px;box-sizing:border-box;box-shadow:inset 0 0 0 0.5px #e8e8e8;"></div>
<div class="a" style="top:284.60px;font-size:6.40px;line-height:8px;color:#33528f;letter-spacing:0.3px;left:289.0px;width:300px;text-align:right;transform-origin:100% 0;transform:scaleX(0.836);">600</div>
<div class="a" style="top:298.80px;font-size:6.40px;line-height:8px;color:#0c0c0c;letter-spacing:0.3px;left:469.75px;transform-origin:0 0;transform:scaleX(0.836);">Surf. Totale</div>
<div class="a" style="left:525px;top:297px;width:67px;height:11px;background:#e4e4e4;border:1px solid #a3a9b4;border-radius:1.5px;box-sizing:border-box;box-shadow:inset 0 0 0 0.5px #e8e8e8;"></div>
<div class="a" style="top:299.00px;font-size:6.40px;line-height:8px;color:#33528f;letter-spacing:0.3px;left:289.0px;width:300px;text-align:right;transform-origin:100% 0;transform:scaleX(0.836);">894</div>
<div class="a" style="top:312.80px;font-size:6.40px;line-height:8px;color:#0c0c0c;letter-spacing:0.3px;left:470px;transform-origin:0 0;transform:scaleX(0.836);">Mtr. Linéaire</div>
<div class="a" style="left:525px;top:311px;width:67px;height:11px;background:#e4e4e4;border:1px solid #a3a9b4;border-radius:1.5px;box-sizing:border-box;box-shadow:inset 0 0 0 0.5px #e8e8e8;"></div>
<div class="a" style="top:313.00px;font-size:6.40px;line-height:8px;color:#33528f;letter-spacing:0.3px;left:289.0px;width:300px;text-align:right;transform-origin:100% 0;transform:scaleX(0.836);">1235</div>
<div class="a" style="left:450px;top:340px;width:244px;height:63px;border:1px solid #d3dcee;box-sizing:border-box;"></div>
<div class="a" style="left:453px;top:340px;width:24px;height:3px;background:#c5d7fc;"></div>
<div class="a" style="top:337.50px;font-size:6.40px;line-height:8px;color:#0c0c0c;letter-spacing:0.3px;left:455px;transform-origin:0 0;transform:scaleX(0.836);">Finitions</div>
<div class="a" style="left:454px;top:351px;width:13px;height:11px;background:#ffffff;border:1px solid #a3a9b4;border-radius:1.5px;box-sizing:border-box;box-shadow:inset 0 0 0 0.5px #e8e8e8;"></div>
<div class="a" style="top:352.93px;font-size:6.40px;line-height:8px;color:#0c0c0c;letter-spacing:0.3px;left:164.05px;width:300px;text-align:right;transform-origin:100% 0;transform:scaleX(0.836);">1</div>
<div class="a" style="top:352.90px;font-size:6.40px;line-height:8px;color:#0c0c0c;letter-spacing:0.3px;left:476px;transform-origin:0 0;transform:scaleX(0.836);">couleur(s)</div>
<div class="a" style="left:520px;top:352px;width:7px;height:7px;background:#fff;border:1px solid #6e6e6e;box-sizing:border-box;"></div>
<svg class="a" style="left:520px;top:352px" width="7" height="7" viewBox="0 0 7 7"><path d="M1.1 3.4 L2.7 5.1 L6.2 1.2" fill="none" stroke="#4a4a4a" stroke-width="0.8"/></svg>
<div class="a" style="top:352.90px;font-size:6.40px;line-height:8px;color:#0c0c0c;letter-spacing:0.3px;left:529.75px;transform-origin:0 0;transform:scaleX(0.836);">Conditionnement</div>
<div class="a" style="left:612px;top:352px;width:7px;height:7px;background:#fff;border:1px solid #6e6e6e;box-sizing:border-box;"></div>
<div class="a" style="top:352.90px;font-size:6.40px;line-height:8px;color:#0c0c0c;letter-spacing:0.3px;left:621.9px;transform-origin:0 0;transform:scaleX(0.836);">Contre-collage</div>
<div class="a" style="left:454px;top:365px;width:143px;height:11px;background:#ffffff;border-top:1px solid #7c7c7c;border-left:1px solid #7c7c7c;border-bottom:1px solid #f6f6f6;border-right:1px solid #f6f6f6;box-sizing:border-box;box-shadow:inset 1px 1px 0 #b4b4b4;"></div>
<div class="a" style="left:587px;top:366px;width:9px;height:9px;background:#f0f0f0;border-top:1px solid #fafafa;border-left:1px solid #fafafa;border-right:1px solid #9a9a9a;border-bottom:1px solid #9a9a9a;box-sizing:border-box;"></div>
<svg class="a" style="left:588.50px;top:368.93px" width="5" height="3" viewBox="0 0 5 3"><path d="M0.3 0.3 L4.7 0.3 L2.5 2.8 Z" fill="#000"/></svg>
<div class="a" style="top:366.93px;font-size:6.40px;line-height:8px;color:#0c0c0c;letter-spacing:0.3px;left:456.95px;transform-origin:0 0;transform:scaleX(0.836);">COL - COLLEE</div>
<div class="a" style="left:612px;top:366px;width:7px;height:7px;background:#fff;border:1px solid #6e6e6e;box-sizing:border-box;"></div>
<svg class="a" style="left:612px;top:366px" width="7" height="7" viewBox="0 0 7 7"><path d="M1.1 3.4 L2.7 5.1 L6.2 1.2" fill="none" stroke="#4a4a4a" stroke-width="0.8"/></svg>
<div class="a" style="top:366.90px;font-size:6.40px;line-height:8px;color:#0c0c0c;letter-spacing:0.3px;left:621.9px;transform-origin:0 0;transform:scaleX(0.836);">Accessoires</div>
<div class="a" style="left:454px;top:379px;width:7px;height:7px;background:#fff;border:1px solid #6e6e6e;box-sizing:border-box;"></div>
<div class="a" style="top:380.30px;font-size:6.40px;line-height:8px;color:#0c0c0c;letter-spacing:0.3px;left:464.4px;transform-origin:0 0;transform:scaleX(0.836);">Collage</div>
<div class="a" style="left:520px;top:379px;width:7px;height:7px;background:#fff;border:1px solid #6e6e6e;box-sizing:border-box;"></div>
<div class="a" style="top:380.30px;font-size:6.40px;line-height:8px;color:#0c0c0c;letter-spacing:0.3px;left:529.75px;transform-origin:0 0;transform:scaleX(0.836);">Opérations manuelles</div>
<div class="a" style="left:612px;top:379px;width:7px;height:7px;background:#fff;border:1px solid #6e6e6e;box-sizing:border-box;"></div>
<div class="a" style="top:380.30px;font-size:6.40px;line-height:8px;color:#0c0c0c;letter-spacing:0.3px;left:621.9px;transform-origin:0 0;transform:scaleX(0.836);">Autre</div>
<div class="a" style="left:450px;top:410px;width:244px;height:33px;border:1px solid #d3dcee;box-sizing:border-box;"></div>
<div class="a" style="left:453px;top:409px;width:26px;height:3px;background:#c5d7fc;"></div>
<div class="a" style="top:406.85px;font-size:6.40px;line-height:8px;color:#0c0c0c;letter-spacing:0.3px;left:455px;transform-origin:0 0;transform:scaleX(0.836);">Gammes</div>
<div class="a" style="left:454px;top:420px;width:234px;height:12px;background:#e4e4e4;border:1px solid #a3a9b4;border-radius:1.5px;box-sizing:border-box;box-shadow:inset 0 0 0 0.5px #e8e8e8;"></div>
<div class="a" style="top:422.30px;font-size:6.40px;line-height:8px;color:#33528f;letter-spacing:0.3px;left:456.8px;transform-origin:0 0;transform:scaleX(0.836);">C00 - COMBINE RAD10 2 COULEURS</div>
<div class="a" style="left:450px;top:450px;width:244px;height:70px;border:1px solid #d3dcee;box-sizing:border-box;"></div>
<div class="a" style="left:453px;top:450px;width:20px;height:3px;background:#c5d7fc;"></div>
<div class="a" style="top:447.30px;font-size:6.40px;line-height:8px;color:#0c0c0c;letter-spacing:0.3px;left:454.65px;transform-origin:0 0;transform:scaleX(0.836);">Palette</div>
<div class="a" style="top:460.20px;font-size:6.40px;line-height:8px;color:#0c0c0c;letter-spacing:0.3px;left:454.65px;transform-origin:0 0;transform:scaleX(0.836);">Nombre PF / Charge</div>
<div class="a" style="top:460.20px;font-size:6.40px;line-height:8px;color:#0c0c0c;letter-spacing:0.3px;left:530.2px;transform-origin:0 0;transform:scaleX(0.836);">Type palette</div>
<div class="a" style="left:577px;top:458px;width:111px;height:11px;background:#e4e4e4;border-top:1px solid #7c7c7c;border-left:1px solid #7c7c7c;border-bottom:1px solid #f6f6f6;border-right:1px solid #f6f6f6;box-sizing:border-box;box-shadow:inset 1px 1px 0 #b4b4b4;"></div>
<div class="a" style="left:678px;top:459px;width:9px;height:9px;background:#f0f0f0;border-top:1px solid #fafafa;border-left:1px solid #fafafa;border-right:1px solid #9a9a9a;border-bottom:1px solid #9a9a9a;box-sizing:border-box;"></div>
<svg class="a" style="left:679.50px;top:461.80px" width="5" height="3" viewBox="0 0 5 3"><path d="M0.3 0.3 L4.7 0.3 L2.5 2.8 Z" fill="#9a9a9a"/></svg>
<div class="a" style="top:459.80px;font-size:6.40px;line-height:8px;color:#33528f;letter-spacing:0.3px;left:579.95px;transform-origin:0 0;transform:scaleX(0.836);">STD - STANDARD</div>
<div class="a" style="left:454px;top:472px;width:53px;height:12px;background:#e4e4e4;border:1px solid #a3a9b4;border-radius:1.5px;box-sizing:border-box;box-shadow:inset 0 0 0 0.5px #e8e8e8;"></div>
<div class="a" style="top:474.20px;font-size:6.40px;line-height:8px;color:#33528f;letter-spacing:0.3px;left:204.10000000000002px;width:300px;text-align:right;transform-origin:100% 0;transform:scaleX(0.836);">70</div>
<div class="a" style="top:474.30px;font-size:6.40px;line-height:8px;color:#0c0c0c;letter-spacing:0.3px;left:530.2px;transform-origin:0 0;transform:scaleX(0.836);">Gestion palette</div>
<div class="a" style="left:577px;top:473px;width:111px;height:10px;background:#e4e4e4;border-top:1px solid #7c7c7c;border-left:1px solid #7c7c7c;border-bottom:1px solid #f6f6f6;border-right:1px solid #f6f6f6;box-sizing:border-box;box-shadow:inset 1px 1px 0 #b4b4b4;"></div>
<div class="a" style="left:678px;top:474px;width:9px;height:8px;background:#f0f0f0;border-top:1px solid #fafafa;border-left:1px solid #fafafa;border-right:1px solid #9a9a9a;border-bottom:1px solid #9a9a9a;box-sizing:border-box;"></div>
<svg class="a" style="left:679.50px;top:476.30px" width="5" height="3" viewBox="0 0 5 3"><path d="M0.3 0.3 L4.7 0.3 L2.5 2.8 Z" fill="#9a9a9a"/></svg>
<div class="a" style="top:474.30px;font-size:6.40px;line-height:8px;color:#33528f;letter-spacing:0.3px;left:579.95px;transform-origin:0 0;transform:scaleX(0.836);">PER - PERDUE</div>
<div class="a" style="top:489.55px;font-size:6.40px;line-height:8px;color:#0c0c0c;letter-spacing:0.3px;left:489px;transform-origin:0 0;transform:scaleX(0.836);">Format palette bd.</div>
<div class="a" style="top:489.55px;font-size:6.40px;line-height:8px;color:#0c0c0c;letter-spacing:0.3px;left:602.6px;transform-origin:0 0;transform:scaleX(0.836);">Haut. encomb.</div>
<svg class="a" style="left:676.40px;top:487.60px" width="10.40" height="10.40" viewBox="0 0 8 8"><line x1="4.9" y1="4.9" x2="6.9" y2="6.9" stroke="#dca234" stroke-width="1.3" stroke-linecap="round"/><circle cx="3.4" cy="3.4" r="2.6" fill="rgba(255,255,255,0.45)" stroke="#7e8aa2" stroke-width="0.6"/></svg>
<div class="a" style="left:454px;top:502px;width:53px;height:12px;background:#e4e4e4;border:1px solid #a3a9b4;border-radius:1.5px;box-sizing:border-box;box-shadow:inset 0 0 0 0.5px #e8e8e8;"></div>
<div class="a" style="top:504.65px;font-size:6.40px;line-height:8px;color:#33528f;letter-spacing:0.3px;left:204.10000000000002px;width:300px;text-align:right;transform-origin:100% 0;transform:scaleX(0.836);">800</div>
<div class="a" style="top:504.60px;font-size:6.40px;line-height:8px;color:#0c0c0c;letter-spacing:0.3px;left:513.3px;transform-origin:0 0;transform:scaleX(0.836);">x</div>
<div class="a" style="left:525px;top:502px;width:45px;height:12px;background:#e4e4e4;border:1px solid #a3a9b4;border-radius:1.5px;box-sizing:border-box;box-shadow:inset 0 0 0 0.5px #e8e8e8;"></div>
<div class="a" style="top:504.65px;font-size:6.40px;line-height:8px;color:#33528f;letter-spacing:0.3px;left:267.4px;width:300px;text-align:right;transform-origin:100% 0;transform:scaleX(0.836);">1000</div>
<div class="a" style="left:577px;top:502px;width:89px;height:12px;background:#e4e4e4;border:1px solid #a3a9b4;border-radius:1.5px;box-sizing:border-box;box-shadow:inset 0 0 0 0.5px #e8e8e8;"></div>
<div class="a" style="top:504.65px;font-size:6.40px;line-height:8px;color:#33528f;letter-spacing:0.3px;left:363.5px;width:300px;text-align:right;transform-origin:100% 0;transform:scaleX(0.836);">1180</div>
</body></html>
